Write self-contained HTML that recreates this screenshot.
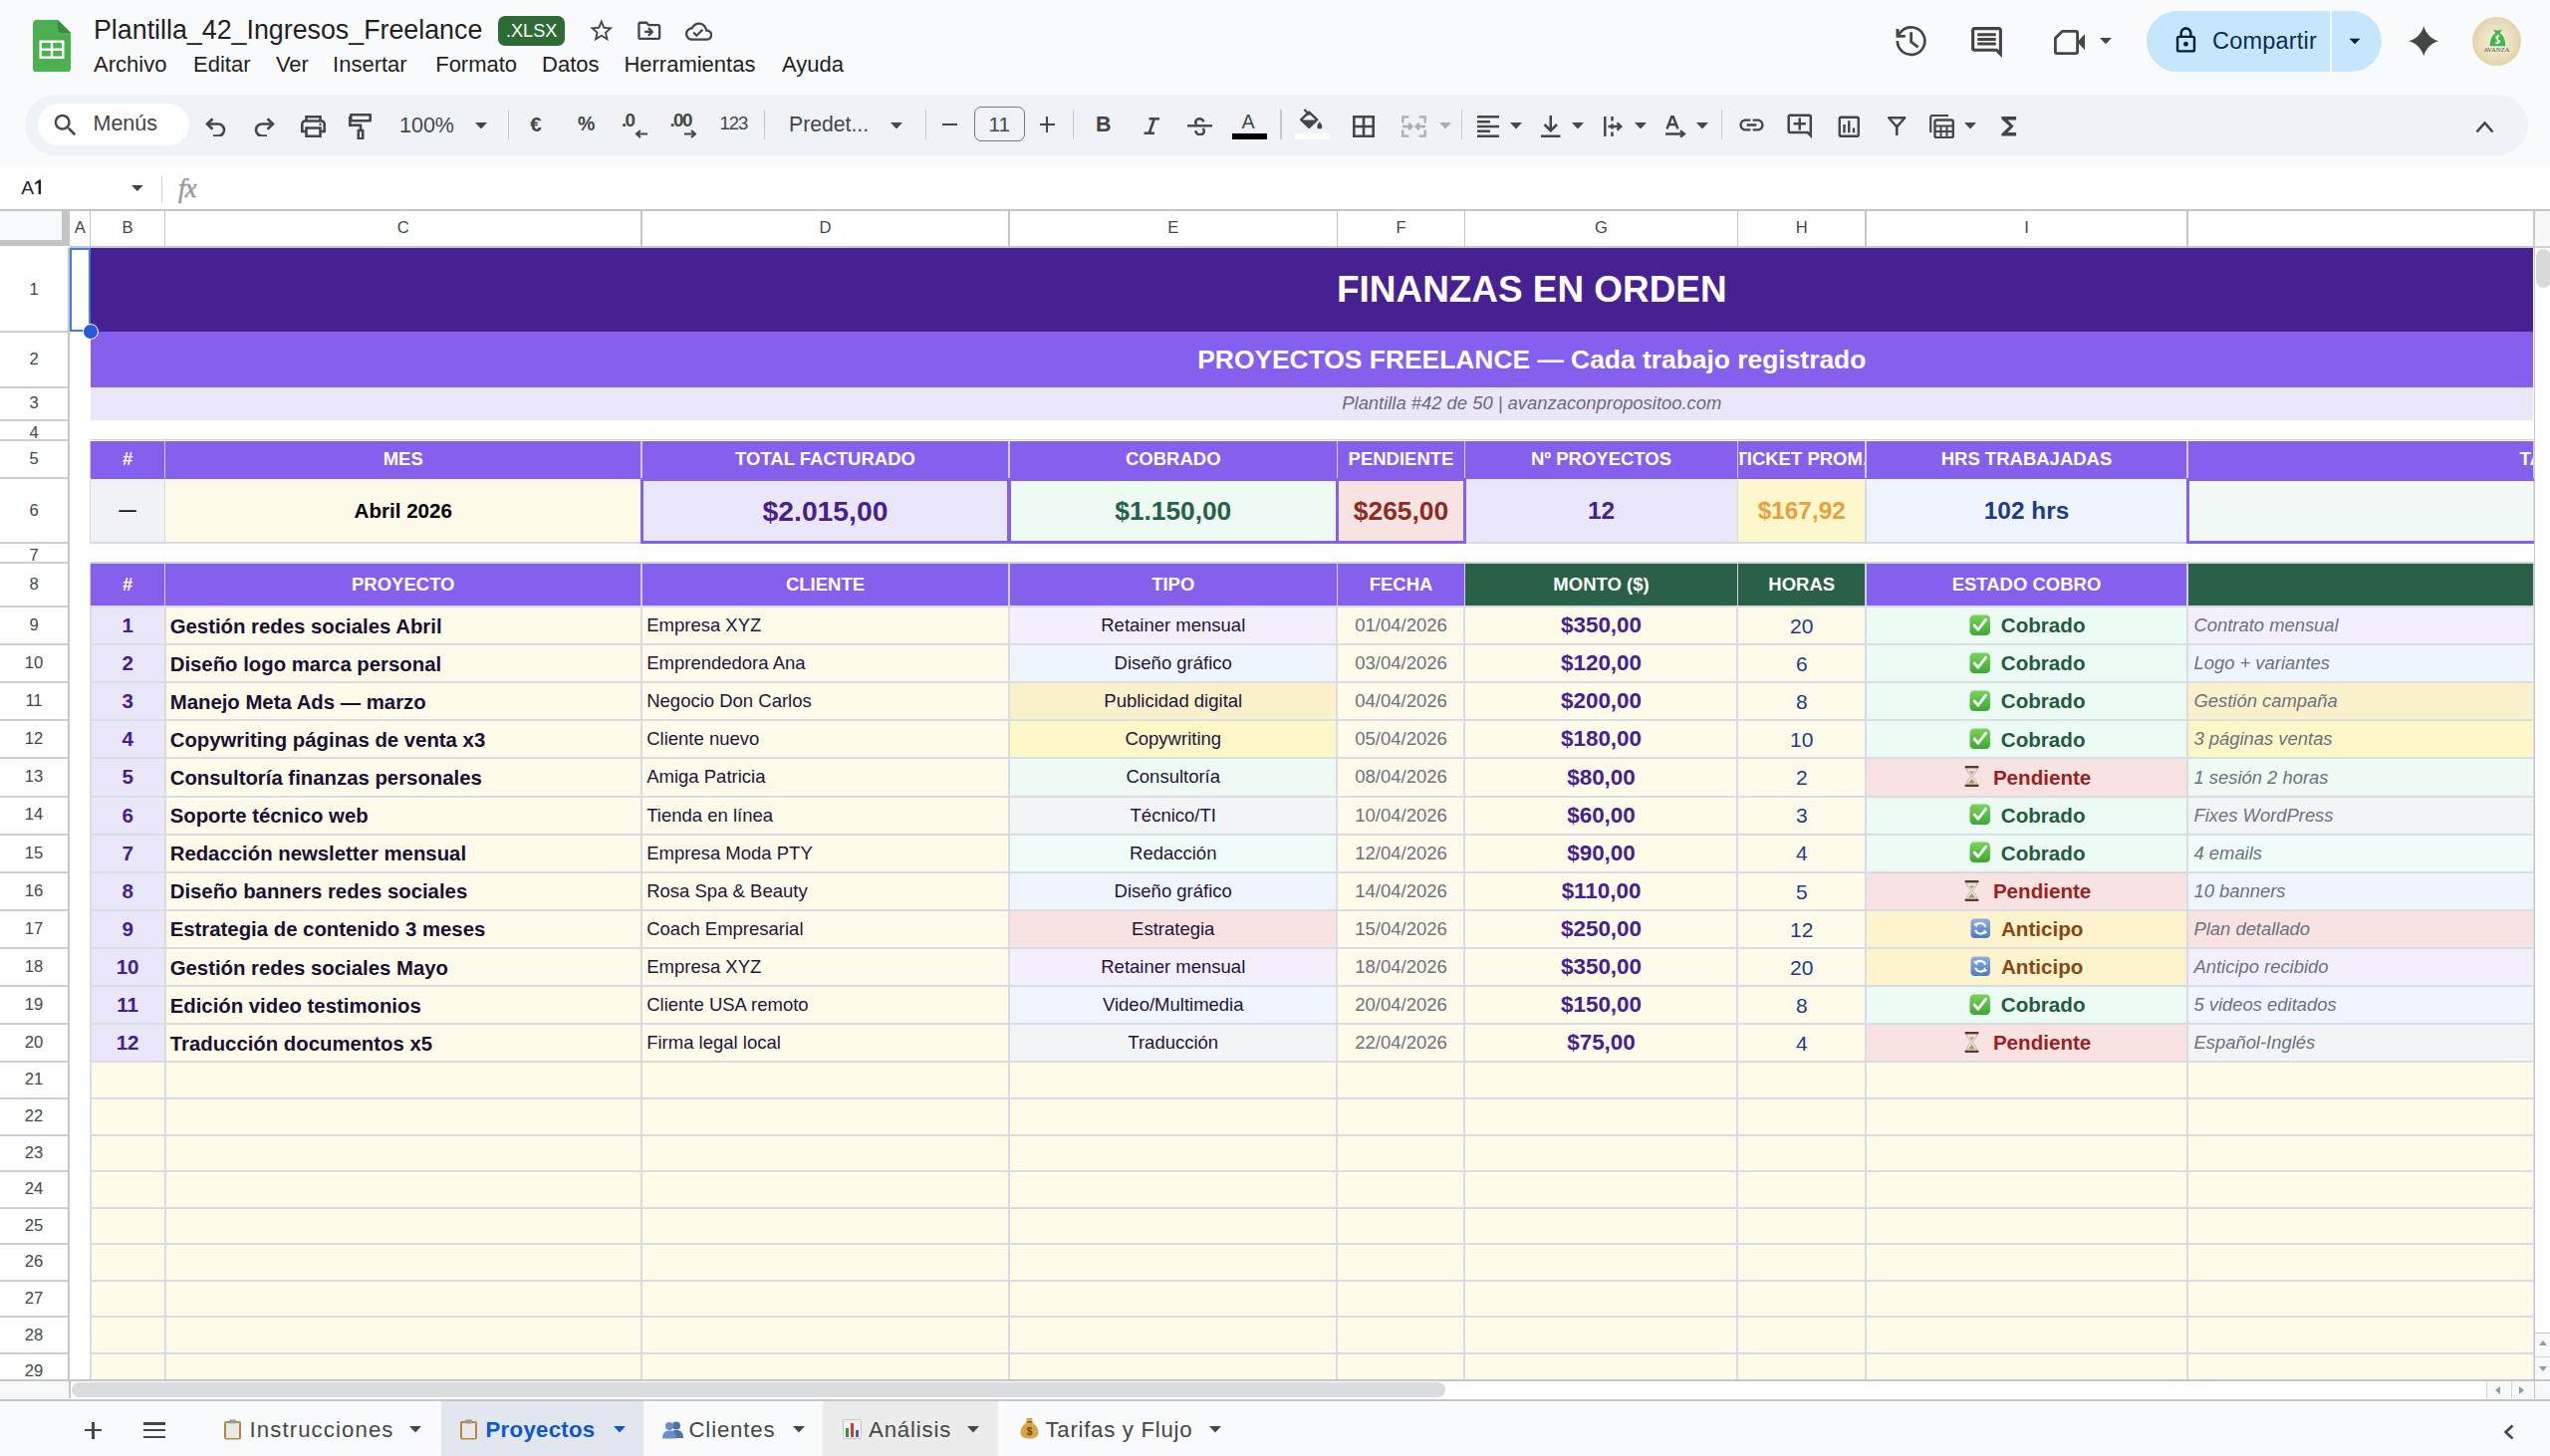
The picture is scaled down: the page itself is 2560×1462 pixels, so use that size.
<!DOCTYPE html><html><head><meta charset="utf-8"><style>html,body{margin:0;padding:0;width:2560px;height:1462px;overflow:hidden;background:#fff;}body{font-family:"Liberation Sans", sans-serif;position:relative;}svg{display:block}</style></head><body><div style="position:absolute;left:0.00px;top:0.00px;width:2560.00px;height:167.50px;background:#f9fbfd;"></div><svg style="position:absolute;left:33px;top:19.5px;" width="38" height="52.5" viewBox="0 0 38 52.5" fill="#4caf50"><path d="M4 0H25L38 13V48.5A4 4 0 0 1 34 52.5H4A4 4 0 0 1 0 48.5V4A4 4 0 0 1 4 0Z" fill="#4caf50"/><path d="M25 0L38 13H29A4 4 0 0 1 25 9Z" fill="#388e3c"/><path d="M6.5 20.5H31.5V39H6.5Z" fill="#fff"/><path d="M9 23H17.8V28.6H9ZM20.2 23H29V28.6H20.2ZM9 31H17.8V36.5H9ZM20.2 31H29V36.5H20.2Z" fill="#4caf50"/></svg><div style="position:absolute;left:94.00px;top:17.01px;font-size:26.8px;line-height:1;color:#1f1f1f;font-weight:normal;font-style:normal;white-space:nowrap;">Plantilla_42_Ingresos_Freelance</div><div style="position:absolute;left:500.2px;top:16.1px;width:67px;height:30.1px;background:#2d6a34;border-radius:7px;"></div><div style="position:absolute;left:-166.30px;width:1400px;text-align:center;top:22.49px;font-size:18.2px;line-height:1;color:#fff;font-weight:normal;font-style:normal;white-space:nowrap;">.XLSX</div><svg style="position:absolute;left:589.7px;top:17px;" width="27.6" height="27.6" viewBox="0 0 24 24" fill="#444"><path d="M22 9.24l-7.19-.62L12 2 9.19 8.63 2 9.24l5.46 4.73L5.82 21 12 17.27 18.18 21l-1.63-7.03L22 9.24zM12 15.4l-3.76 2.27 1-4.28-3.32-2.88 4.38-.38L12 6.1l1.71 4.04 4.38.38-3.32 2.88 1 4.28L12 15.4z"/></svg><svg style="position:absolute;left:638.1px;top:17.3px;" width="27.6" height="27.6" viewBox="0 0 24 24" fill="#444"><path d="M20 6h-8l-2-2H4c-1.1 0-1.99.9-1.99 2L2 18c0 1.1.9 2 2 2h16c1.1 0 2-.9 2-2V8c0-1.1-.9-2-2-2zm0 12H4V6h5.17l2 2H20v10zm-7.84-6H8v2h4.16l-1.59 1.59L11.99 17 16 13.01 11.99 9l-1.41 1.41L12.16 12z"/></svg><svg style="position:absolute;left:687.6px;top:17.8px;" width="27.3" height="27.3" viewBox="0 0 24 24" fill="#444"><path d="M19.35 10.04C18.67 6.59 15.64 4 12 4 9.11 4 6.6 5.64 5.35 8.04 2.34 8.36 0 10.91 0 14c0 3.31 2.69 6 6 6h13c2.76 0 5-2.24 5-5 0-2.64-2.05-4.78-4.65-4.96zM19 18H6c-2.21 0-4-1.79-4-4 0-2.05 1.53-3.76 3.56-3.97l1.07-.11.5-.95C8.08 7.14 9.94 6 12 6c2.62 0 4.88 1.86 5.39 4.43l.3 1.5 1.53.11c1.56.1 2.78 1.41 2.78 2.96 0 1.65-1.35 3-3 3zm-9-3.82l-2.09-2.09L6.5 13.5 10 17l6.01-6.01-1.41-1.41z"/></svg><div style="position:absolute;left:94.10px;top:53.68px;font-size:22px;line-height:1;color:#1f1f1f;font-weight:normal;font-style:normal;white-space:nowrap;">Archivo</div><div style="position:absolute;left:194.00px;top:53.68px;font-size:22px;line-height:1;color:#1f1f1f;font-weight:normal;font-style:normal;white-space:nowrap;">Editar</div><div style="position:absolute;left:276.90px;top:53.68px;font-size:22px;line-height:1;color:#1f1f1f;font-weight:normal;font-style:normal;white-space:nowrap;">Ver</div><div style="position:absolute;left:334.10px;top:53.68px;font-size:22px;line-height:1;color:#1f1f1f;font-weight:normal;font-style:normal;white-space:nowrap;">Insertar</div><div style="position:absolute;left:437.20px;top:53.68px;font-size:22px;line-height:1;color:#1f1f1f;font-weight:normal;font-style:normal;white-space:nowrap;">Formato</div><div style="position:absolute;left:544.10px;top:53.68px;font-size:22px;line-height:1;color:#1f1f1f;font-weight:normal;font-style:normal;white-space:nowrap;">Datos</div><div style="position:absolute;left:626.40px;top:53.68px;font-size:22px;line-height:1;color:#1f1f1f;font-weight:normal;font-style:normal;white-space:nowrap;">Herramientas</div><div style="position:absolute;left:784.90px;top:53.68px;font-size:22px;line-height:1;color:#1f1f1f;font-weight:normal;font-style:normal;white-space:nowrap;">Ayuda</div><svg style="position:absolute;left:1900px;top:22px;" width="38" height="38" viewBox="0 0 38 38" fill="none"><path d="M4.85 19.1A13.75 13.75 0 1 0 8.9 9.4L5.2 13.6" fill="none" stroke="#444746" stroke-width="2.7"/><path d="M3.5 7H6.5V13H12.8V15.8H3.5Z" fill="#444746"/><path d="M18.65 10.3V20L25.6 25.3" fill="none" stroke="#444746" stroke-width="2.8" stroke-linejoin="miter"/></svg><svg style="position:absolute;left:1975.5px;top:23.5px;" width="37" height="37" viewBox="0 0 24 24" fill="#444"><path d="M21.99 4c0-1.1-.89-2-1.99-2H4c-1.1 0-2 .9-2 2v12c0 1.1.9 2 2 2h14l4 4-.01-18zM20 4v13.17L18.83 16H4V4h16zM6 12h12v2H6zm0-3h12v2H6zm0-3h12v2H6z"/></svg><svg style="position:absolute;left:2062px;top:29.5px;" width="32" height="25" viewBox="0 0 32 25" fill="none"><path d="M1.4 8.3L8.3 1.4H21.8A1.8 1.8 0 0 1 23.6 3.2V21.8A1.8 1.8 0 0 1 21.8 23.6H3.2A1.8 1.8 0 0 1 1.4 21.8Z" fill="none" stroke="#444746" stroke-width="2.8" stroke-linejoin="round"/><path d="M23.5 12.2L31 4V20.3Z" fill="#444746"/></svg><svg style="position:absolute;left:2108.0px;top:37.85px;" width="12" height="6.3" viewBox="0 0 12 6.3" fill="none"><path d="M0 0H12L6.0 6.3Z" fill="#444746"/></svg><div style="position:absolute;left:2154.7px;top:11px;width:236px;height:60.5px;background:#c6e6fd;border-radius:31px;"></div><div style="position:absolute;left:2339.00px;top:11.00px;width:1.80px;height:60.50px;background:#f9fbfd;"></div><svg style="position:absolute;left:2180px;top:26px;" width="29" height="29" viewBox="0 0 24 24" fill="#001d35"><path d="M18 8h-1V6c0-2.76-2.24-5-5-5S7 3.24 7 6v2H6c-1.1 0-2 .9-2 2v10c0 1.1.9 2 2 2h12c1.1 0 2-.9 2-2V10c0-1.1-.9-2-2-2zM9 6c0-1.66 1.34-3 3-3s3 1.34 3 3v2H9V6zm9 14H6V10h12v10zm-6-3c1.1 0 2-.9 2-2s-.9-2-2-2-2 .9-2 2 .9 2 2 2z"/></svg><div style="position:absolute;left:2221.00px;top:29.61px;font-size:23.5px;line-height:1;color:#0b2e4f;font-weight:normal;font-style:normal;white-space:nowrap;letter-spacing:0.2px;">Compartir</div><svg style="position:absolute;left:2351px;top:28px;" width="26" height="26" viewBox="0 0 24 24" fill="#001d35"><path d="M7 10l5 5 5-5z"/></svg><svg style="position:absolute;left:2418px;top:26px;" width="30.5" height="30.5" viewBox="0 0 30 30" fill="none"><path d="M15 0C16.6 7.2 22.8 13.4 30 15C22.8 16.6 16.6 22.8 15 30C13.4 22.8 7.2 16.6 0 15C7.2 13.4 13.4 7.2 15 0Z" fill="#444746"/></svg><div style="position:absolute;left:2482px;top:16.6px;width:49px;height:49px;border-radius:50%;background:radial-gradient(circle at 50% 50%,#f5efdf 0%,#e8dcb8 55%,#d5c693 100%);"></div><svg style="position:absolute;left:2498.5px;top:28.5px;" width="17" height="18" viewBox="0 0 17 18" fill="none"><path d="M4 0.5C6 1.8 11 1.8 13 0.5L10.6 4.2C14.5 6.5 16.5 12 16.2 17.2H0.8C0.5 12 2.5 6.5 6.4 4.2Z" fill="#3fb54a"/><path d="M10.5 7.5C9.8 6.8 7 6.6 6.8 8.6C6.6 10.6 10.6 10.2 10.5 12.5C10.4 14.6 7.5 14.6 6.3 13.6M8.5 5.8V15.2" fill="none" stroke="#e9f5e0" stroke-width="1.4"/></svg><div style="position:absolute;left:1806.50px;width:1400px;text-align:center;top:46.67px;font-size:6.3px;line-height:1;color:#55503a;font-weight:normal;font-style:normal;white-space:nowrap;font-family:'Liberation Serif', serif;letter-spacing:0.2px;">AVANZA</div><div style="position:absolute;left:25px;top:94.5px;width:2512.5px;height:61px;background:#eff3f8;border-radius:31px;"></div><div style="position:absolute;left:38.1px;top:103.6px;width:152.4px;height:42.3px;background:#fff;border-radius:22px;"></div><svg style="position:absolute;left:50.9px;top:110.5px;" width="29.5" height="29.5" viewBox="0 0 24 24" fill="#444746"><path d="M15.5 14h-.79l-.28-.27C15.41 12.59 16 11.11 16 9.5 16 5.91 13.09 3 9.5 3S3 5.91 3 9.5 5.91 16 9.5 16c1.61 0 3.09-.59 4.23-1.57l.27.28v.79l5 4.99L20.49 19l-4.99-5zm-6 0C7.01 14 5 11.99 5 9.5S7.01 5 9.5 5 14 7.01 14 9.5 11.99 14 9.5 14z"/></svg><div style="position:absolute;left:93.50px;top:113.70px;font-size:21.5px;line-height:1;color:#444;font-weight:normal;font-style:normal;white-space:nowrap;">Menús</div><svg style="position:absolute;left:206px;top:118px;" width="21" height="19" viewBox="0 0 21 19" fill="none"><path d="M2 6.5H13A6 6 0 0 1 13 18.5H8" fill="none" stroke="#444746" stroke-width="2.6"/><path d="M7.5 1.2L2 6.5L7.5 11.8" fill="none" stroke="#444746" stroke-width="2.6"/></svg><svg style="position:absolute;left:254.5px;top:118px;" width="21" height="19" viewBox="0 0 21 19" fill="none"><path d="M19 6.5H8A6 6 0 0 0 8 18.5H13" fill="none" stroke="#444746" stroke-width="2.6"/><path d="M13.5 1.2L19 6.5L13.5 11.8" fill="none" stroke="#444746" stroke-width="2.6"/></svg><svg style="position:absolute;left:301.5px;top:115.5px;" width="25" height="22" viewBox="0 0 25 22" fill="none"><path d="M5.5 5V1.3H19.5V5" fill="none" stroke="#444746" stroke-width="2.6"/><path d="M5.5 16H1.3V8.5A3 3 0 0 1 4.3 5.5H20.7A3 3 0 0 1 23.7 8.5V16H19.5" fill="none" stroke="#444746" stroke-width="2.6"/><path d="M5.5 12.5H19.5V20.7H5.5Z" fill="none" stroke="#444746" stroke-width="2.6"/><circle cx="19.5" cy="9" r="1.2" fill="#444746"/></svg><svg style="position:absolute;left:350px;top:113.5px;" width="23" height="26.5" viewBox="0 0 23 26.5" fill="none"><path d="M2.3 1.3H21.7V7.2H2.3Z" fill="none" stroke="#444746" stroke-width="2.6" stroke-linejoin="round"/><path d="M2.3 4H1.3V11.8H12V17" fill="none" stroke="#444746" stroke-width="2.6"/><path d="M9.8 17H14.2V25.2H9.8Z" fill="none" stroke="#444746" stroke-width="2.6" stroke-linejoin="round"/></svg><div style="position:absolute;left:401.00px;top:116.20px;font-size:21.5px;line-height:1;color:#444746;font-weight:normal;font-style:normal;white-space:nowrap;">100%</div><svg style="position:absolute;left:477.3px;top:122.75px;" width="12" height="6.5" viewBox="0 0 12 6.5" fill="none"><path d="M0 0H12L6.0 6.5Z" fill="#444746"/></svg><div style="position:absolute;left:509.50px;top:110.00px;width:1.40px;height:30.00px;background:#c7c7c7;"></div><div style="position:absolute;left:532.30px;top:114.55px;font-size:20.5px;line-height:1;color:#444746;font-weight:bold;font-style:normal;white-space:nowrap;">€</div><div style="position:absolute;left:580.00px;top:115.39px;font-size:19.5px;line-height:1;color:#444746;font-weight:bold;font-style:normal;white-space:nowrap;">%</div><div style="position:absolute;left:624.00px;top:112.09px;font-size:18.8px;line-height:1;color:#444746;font-weight:bold;font-style:normal;white-space:nowrap;letter-spacing:-1.6px;">.0</div><svg style="position:absolute;left:637px;top:130px;" width="14" height="9" viewBox="0 0 14 9" fill="none"><path d="M13 4.5H2.5M6 1L2 4.5L6 8" fill="none" stroke="#444746" stroke-width="2"/></svg><div style="position:absolute;left:672.50px;top:112.09px;font-size:18.8px;line-height:1;color:#444746;font-weight:bold;font-style:normal;white-space:nowrap;letter-spacing:-1.6px;">.00</div><svg style="position:absolute;left:685.5px;top:130px;" width="14" height="9" viewBox="0 0 14 9" fill="none"><path d="M1 4.5H11.5M8 1L12 4.5L8 8" fill="none" stroke="#444746" stroke-width="2"/></svg><div style="position:absolute;left:722.50px;top:115.26px;font-size:18.6px;line-height:1;color:#444746;font-weight:normal;font-style:normal;white-space:nowrap;letter-spacing:-1.1px;">123</div><div style="position:absolute;left:767.00px;top:110.00px;width:1.40px;height:30.00px;background:#c7c7c7;"></div><div style="position:absolute;left:792.00px;top:113.95px;font-size:21.2px;line-height:1;color:#444746;font-weight:normal;font-style:normal;white-space:nowrap;">Predet...</div><svg style="position:absolute;left:893.5px;top:122.75px;" width="12" height="6.5" viewBox="0 0 12 6.5" fill="none"><path d="M0 0H12L6.0 6.5Z" fill="#444746"/></svg><div style="position:absolute;left:928.60px;top:110.00px;width:1.40px;height:30.00px;background:#c7c7c7;"></div><div style="position:absolute;left:945.80px;top:123.80px;width:15.40px;height:2.20px;background:#444746;"></div><div style="position:absolute;left:977.6px;top:107.2px;width:51.4px;height:35.3px;border:1.6px solid #747775;border-radius:7px;box-sizing:border-box;"></div><div style="position:absolute;left:303.30px;width:1400px;text-align:center;top:114.99px;font-size:20.8px;line-height:1;color:#444746;font-weight:normal;font-style:normal;white-space:nowrap;">11</div><div style="position:absolute;left:1043.50px;top:123.80px;width:15.70px;height:2.20px;background:#444746;"></div><div style="position:absolute;left:1050.30px;top:117.40px;width:2.20px;height:15.20px;background:#444746;"></div><div style="position:absolute;left:1076.60px;top:110.00px;width:1.40px;height:30.00px;background:#c7c7c7;"></div><div style="position:absolute;left:1100.00px;top:115.20px;font-size:21.5px;line-height:1;color:#444746;font-weight:bold;font-style:normal;white-space:nowrap;">B</div><svg style="position:absolute;left:1147.5px;top:118px;" width="16.5" height="17" viewBox="0 0 16.5 17" fill="none"><path d="M5.5 1.3H16M0.5 15.7H11M10.8 1.3L5.7 15.7" fill="none" stroke="#444746" stroke-width="2.6"/></svg><svg style="position:absolute;left:1192px;top:117.5px;" width="25" height="18.5" viewBox="0 0 25 18.5" fill="none"><path d="M16.5 4.2C15.5 2.3 14 1.3 12.5 1.3C10 1.3 8.3 2.6 8.3 4.6C8.3 5.5 8.6 6.2 9.2 6.8" fill="none" stroke="#444746" stroke-width="2.6"/><path d="M0 8.3H25" stroke="#444746" stroke-width="2.4"/><path d="M8.2 13.2C8.8 15.6 10.5 17.2 12.5 17.2C15 17.2 16.8 15.9 16.8 13.7C16.8 12.5 16.4 11.6 15.6 10.8" fill="none" stroke="#444746" stroke-width="2.6"/></svg><div style="position:absolute;left:1246.50px;top:113.04px;font-size:19.8px;line-height:1;color:#444746;font-weight:normal;font-style:normal;white-space:nowrap;">A</div><div style="position:absolute;left:1237.00px;top:133.90px;width:35.00px;height:6.10px;background:#000;"></div><div style="position:absolute;left:1285.20px;top:110.00px;width:1.40px;height:30.00px;background:#c7c7c7;"></div><svg style="position:absolute;left:1305px;top:108.5px;" width="23.5" height="21.5" viewBox="0 0 23.5 21.5" fill="none"><path d="M4.5 1L9.5 6.5" stroke="#444746" stroke-width="2.4"/><path d="M1.2 11.2L9.2 3.6L17.2 11.2L9.2 18.8Z" fill="none" stroke="#444746" stroke-width="2.4" stroke-linejoin="round"/><path d="M2.5 11.5H16L9.2 18Z" fill="#444746"/><path d="M19.8 13.2C21 14.8 22.3 16.2 22.3 17.9A2.5 2.5 0 0 1 17.3 17.9C17.3 16.2 18.6 14.8 19.8 13.2Z" fill="#444746"/></svg><div style="position:absolute;left:1300.00px;top:134.20px;width:35.00px;height:5.80px;background:#ffffff;"></div><svg style="position:absolute;left:1357.5px;top:115.5px;" width="22" height="22" viewBox="0 0 22 22" fill="none"><path d="M1.3 1.3H20.7V20.7H1.3ZM11 1.3V20.7M1.3 11H20.7" fill="none" stroke="#444746" stroke-width="2.6"/></svg><svg style="position:absolute;left:1407px;top:115.5px;" width="25" height="22" viewBox="0 0 25 22" fill="none"><path d="M7.5 1.3H1.3V7.5M1.3 14.5V20.7H7.5M17.5 1.3H23.7V7.5M23.7 14.5V20.7H17.5M1 11H10.2M7.2 7.8L10.5 11L7.2 14.2M24 11H14.8M17.8 7.8L14.5 11L17.8 14.2" fill="none" stroke="#adadad" stroke-width="2.3"/></svg><svg style="position:absolute;left:1445.3px;top:123.05px;" width="12" height="6.5" viewBox="0 0 12 6.5" fill="none"><path d="M0 0H12L6.0 6.5Z" fill="#adadad"/></svg><div style="position:absolute;left:1466.60px;top:110.00px;width:1.40px;height:30.00px;background:#c7c7c7;"></div><svg style="position:absolute;left:1483px;top:115.5px;" width="22" height="22" viewBox="0 0 22 22" fill="none"><path d="M0 1.3H22M0 6.3H13M0 11H22M0 15.7H13M0 20.7H22" stroke="#444746" stroke-width="2.4"/></svg><svg style="position:absolute;left:1515.6px;top:123.05px;" width="12" height="6.5" viewBox="0 0 12 6.5" fill="none"><path d="M0 0H12L6.0 6.5Z" fill="#444746"/></svg><svg style="position:absolute;left:1547px;top:115.5px;" width="19.5" height="22" viewBox="0 0 19.5 22" fill="none"><path d="M9.75 0V15M3.5 9L9.75 15.2L16 9M0 20.7H19.5" fill="none" stroke="#444746" stroke-width="2.5"/></svg><svg style="position:absolute;left:1578.3px;top:123.05px;" width="12" height="6.5" viewBox="0 0 12 6.5" fill="none"><path d="M0 0H12L6.0 6.5Z" fill="#444746"/></svg><svg style="position:absolute;left:1609.5px;top:116.5px;" width="19" height="20" viewBox="0 0 19 20" fill="none"><path d="M1.3 0V20M8.5 0V4.5M8.5 7.5V12.5M8.5 15.5V20M4.5 10H17M13.5 6.3L17.3 10L13.5 13.7" fill="none" stroke="#444746" stroke-width="2.5"/></svg><svg style="position:absolute;left:1640.7px;top:123.05px;" width="12" height="6.5" viewBox="0 0 12 6.5" fill="none"><path d="M0 0H12L6.0 6.5Z" fill="#444746"/></svg><svg style="position:absolute;left:1671.5px;top:115.5px;" width="21.5" height="22" viewBox="0 0 21.5 22" fill="none"><path d="M1.5 13.5L6.2 1.2H7.8L12.5 13.5M3.2 9H10.8" fill="none" stroke="#444746" stroke-width="2.4"/><path d="M0 18.5H18M15 15.2L18.8 18.5L15 21.8" fill="none" stroke="#444746" stroke-width="2.4"/></svg><svg style="position:absolute;left:1703.0px;top:123.05px;" width="12" height="6.5" viewBox="0 0 12 6.5" fill="none"><path d="M0 0H12L6.0 6.5Z" fill="#444746"/></svg><div style="position:absolute;left:1727.50px;top:110.00px;width:1.40px;height:30.00px;background:#c7c7c7;"></div><svg style="position:absolute;left:1743.5px;top:110.5px;" width="29" height="29" viewBox="0 0 24 24" fill="#444"><path d="M3.9 12c0-1.71 1.39-3.1 3.1-3.1h4V7H7c-2.76 0-5 2.24-5 5s2.24 5 5 5h4v-1.9H7c-1.71 0-3.1-1.39-3.1-3.1zM8 13h8v-2H8v2zm9-6h-4v1.9h4c1.71 0 3.1 1.39 3.1 3.1s-1.39 3.1-3.1 3.1h-4V17h4c2.76 0 5-2.24 5-5s-2.24-5-5-5z"/></svg><svg style="position:absolute;left:1792px;top:111.5px;" width="29.5" height="29.5" viewBox="0 0 24 24" fill="#444"><path d="M22 4c0-1.1-.9-2-2-2H4c-1.1 0-1.99.9-1.99 2L2 16c0 1.1.9 2 2 2h14l4 4V4zm-2 13.17L18.83 16H4V4h16v13.17zM13 5h-2v4H7v2h4v4h2v-4h4V9h-4z"/></svg><svg style="position:absolute;left:1841.5px;top:112.5px;" width="28.5" height="28.5" viewBox="0 0 24 24" fill="#444"><path d="M19 3H5c-1.1 0-2 .9-2 2v14c0 1.1.9 2 2 2h14c1.1 0 2-.9 2-2V5c0-1.1-.9-2-2-2zm0 16H5V5h14v14zM7 10h2v7H7zm4-3h2v10h-2zm4 6h2v4h-2z"/></svg><svg style="position:absolute;left:1895px;top:117px;" width="18.5" height="19" viewBox="0 0 18.5 19" fill="none"><path d="M1.2 1.2H17.3L9.25 10.5Z" fill="none" stroke="#444746" stroke-width="2.4" stroke-linejoin="round"/><path d="M9.25 9V18.5" stroke="#444746" stroke-width="2.6" stroke-linecap="round"/></svg><svg style="position:absolute;left:1937px;top:114.5px;" width="25" height="24.5" viewBox="0 0 25 24.5" fill="none"><path d="M1.2 18V3A2 2 0 0 1 3.2 1H19" fill="none" stroke="#444746" stroke-width="2.2"/><rect x="5.5" y="5.5" width="18.3" height="17.8" rx="2" fill="none" stroke="#444746" stroke-width="2.4"/><path d="M5.5 11.5H23.8M5.5 17H23.8M11.5 11.5V23M17.5 11.5V23" stroke="#444746" stroke-width="2"/></svg><svg style="position:absolute;left:1971.7px;top:123.05px;" width="12" height="6.5" viewBox="0 0 12 6.5" fill="none"><path d="M0 0H12L6.0 6.5Z" fill="#444746"/></svg><svg style="position:absolute;left:2001.5px;top:111.5px;" width="29.5" height="29.5" viewBox="0 0 24 24" fill="#444"><path d="M18 4H6v2l6.5 6L6 18v2h12v-3h-7l5-5-5-5h7z"/></svg><svg style="position:absolute;left:2485px;top:119.5px;" width="19" height="15" viewBox="0 0 19 15" fill="none"><path d="M1.5 12.5L9.5 3.5L17.5 12.5" fill="none" stroke="#444746" stroke-width="2.6"/></svg><div style="position:absolute;left:21.30px;top:178.65px;font-size:19.2px;line-height:1;color:#1f1f1f;font-weight:normal;font-style:normal;white-space:nowrap;">A</div><svg style="position:absolute;left:34px;top:180px;" width="8" height="15" viewBox="0 0 8 15" fill="none"><path d="M1.2 3.6L5.2 0.6H7V14.9H4.6V3.5L1.2 5.6Z" fill="#1f1f1f"/></svg><svg style="position:absolute;left:131.5px;top:185.9px;" width="11.7" height="5.9" viewBox="0 0 11.7 5.9" fill="none"><path d="M0 0H11.7L5.85 5.9Z" fill="#444"/></svg><div style="position:absolute;left:161.80px;top:177.00px;width:1.20px;height:25.50px;background:#c7d0e0;"></div><div style="position:absolute;left:179.00px;top:176.07px;font-size:26.5px;line-height:1;color:#9b9b9b;font-weight:normal;font-style:italic;white-space:nowrap;font-family:'Liberation Serif', serif;letter-spacing:-0.5px;-webkit-text-stroke:0.5px #9b9b9b;">fx</div><div style="position:absolute;left:0.00px;top:210.40px;width:2560.00px;height:1.40px;background:#c4c7c5;"></div><div style="position:absolute;left:0.00px;top:211.80px;width:62.40px;height:28.90px;background:#f8f9fa;"></div><div style="position:absolute;left:62.40px;top:211.80px;width:7.20px;height:35.70px;background:#c4c4c4;"></div><div style="position:absolute;left:0.00px;top:240.70px;width:69.60px;height:6.80px;background:#c4c4c4;"></div><div style="position:absolute;left:69.60px;top:247.30px;width:2490.40px;height:1.40px;background:#c4c7c5;"></div><div style="position:absolute;left:90.00px;top:211.80px;width:1.40px;height:35.50px;background:#c4c7c5;"></div><div style="position:absolute;left:164.80px;top:211.80px;width:1.40px;height:35.50px;background:#c4c7c5;"></div><div style="position:absolute;left:643.30px;top:211.80px;width:1.40px;height:35.50px;background:#c4c7c5;"></div><div style="position:absolute;left:1012.30px;top:211.80px;width:1.40px;height:35.50px;background:#c4c7c5;"></div><div style="position:absolute;left:1341.80px;top:211.80px;width:1.40px;height:35.50px;background:#c4c7c5;"></div><div style="position:absolute;left:1469.80px;top:211.80px;width:1.40px;height:35.50px;background:#c4c7c5;"></div><div style="position:absolute;left:1743.80px;top:211.80px;width:1.40px;height:35.50px;background:#c4c7c5;"></div><div style="position:absolute;left:1872.30px;top:211.80px;width:1.40px;height:35.50px;background:#c4c7c5;"></div><div style="position:absolute;left:2195.30px;top:211.80px;width:1.40px;height:35.50px;background:#c4c7c5;"></div><div style="position:absolute;left:2542.80px;top:211.80px;width:1.40px;height:35.50px;background:#c4c7c5;"></div><div style="position:absolute;left:-619.65px;width:1400px;text-align:center;top:220.55px;font-size:16.6px;line-height:1;color:#444746;font-weight:normal;font-style:normal;white-space:nowrap;">A</div><div style="position:absolute;left:-571.90px;width:1400px;text-align:center;top:220.55px;font-size:16.6px;line-height:1;color:#444746;font-weight:normal;font-style:normal;white-space:nowrap;">B</div><div style="position:absolute;left:-295.25px;width:1400px;text-align:center;top:220.55px;font-size:16.6px;line-height:1;color:#444746;font-weight:normal;font-style:normal;white-space:nowrap;">C</div><div style="position:absolute;left:128.50px;width:1400px;text-align:center;top:220.55px;font-size:16.6px;line-height:1;color:#444746;font-weight:normal;font-style:normal;white-space:nowrap;">D</div><div style="position:absolute;left:477.75px;width:1400px;text-align:center;top:220.55px;font-size:16.6px;line-height:1;color:#444746;font-weight:normal;font-style:normal;white-space:nowrap;">E</div><div style="position:absolute;left:706.50px;width:1400px;text-align:center;top:220.55px;font-size:16.6px;line-height:1;color:#444746;font-weight:normal;font-style:normal;white-space:nowrap;">F</div><div style="position:absolute;left:907.50px;width:1400px;text-align:center;top:220.55px;font-size:16.6px;line-height:1;color:#444746;font-weight:normal;font-style:normal;white-space:nowrap;">G</div><div style="position:absolute;left:1108.75px;width:1400px;text-align:center;top:220.55px;font-size:16.6px;line-height:1;color:#444746;font-weight:normal;font-style:normal;white-space:nowrap;">H</div><div style="position:absolute;left:1334.50px;width:1400px;text-align:center;top:220.55px;font-size:16.6px;line-height:1;color:#444746;font-weight:normal;font-style:normal;white-space:nowrap;">I</div><div style="position:absolute;left:68.40px;top:248.50px;width:1.60px;height:1137.50px;background:#c4c7c5;"></div><div style="position:absolute;left:0.00px;top:332.00px;width:69.00px;height:1.50px;background:#cdcfcf;"></div><div style="position:absolute;left:0;top:248.50px;width:68px;height:84.50px;overflow:hidden;"><div style="position:absolute;left:-666.00px;width:1400px;text-align:center;top:34.10px;font-size:16.6px;line-height:1;color:#444746;font-weight:normal;font-style:normal;white-space:nowrap;">1</div></div><div style="position:absolute;left:0.00px;top:388.00px;width:69.00px;height:1.50px;background:#cdcfcf;"></div><div style="position:absolute;left:0;top:333.00px;width:68px;height:56.00px;overflow:hidden;"><div style="position:absolute;left:-666.00px;width:1400px;text-align:center;top:19.85px;font-size:16.6px;line-height:1;color:#444746;font-weight:normal;font-style:normal;white-space:nowrap;">2</div></div><div style="position:absolute;left:0.00px;top:421.00px;width:69.00px;height:1.50px;background:#cdcfcf;"></div><div style="position:absolute;left:0;top:389.00px;width:68px;height:33.00px;overflow:hidden;"><div style="position:absolute;left:-666.00px;width:1400px;text-align:center;top:8.35px;font-size:16.6px;line-height:1;color:#444746;font-weight:normal;font-style:normal;white-space:nowrap;">3</div></div><div style="position:absolute;left:0.00px;top:441.00px;width:69.00px;height:1.50px;background:#cdcfcf;"></div><div style="position:absolute;left:0;top:422.00px;width:68px;height:19.50px;overflow:hidden;"><div style="position:absolute;left:-666.00px;width:1400px;text-align:center;top:5.25px;font-size:16.6px;line-height:1;color:#444746;font-weight:normal;font-style:normal;white-space:nowrap;">4</div></div><div style="position:absolute;left:0.00px;top:479.00px;width:69.00px;height:1.50px;background:#cdcfcf;"></div><div style="position:absolute;left:0;top:441.50px;width:68px;height:39.00px;overflow:hidden;"><div style="position:absolute;left:-666.00px;width:1400px;text-align:center;top:11.35px;font-size:16.6px;line-height:1;color:#444746;font-weight:normal;font-style:normal;white-space:nowrap;">5</div></div><div style="position:absolute;left:0.00px;top:544.00px;width:69.00px;height:1.50px;background:#cdcfcf;"></div><div style="position:absolute;left:0;top:480.50px;width:68px;height:64.50px;overflow:hidden;"><div style="position:absolute;left:-666.00px;width:1400px;text-align:center;top:24.10px;font-size:16.6px;line-height:1;color:#444746;font-weight:normal;font-style:normal;white-space:nowrap;">6</div></div><div style="position:absolute;left:0.00px;top:564.00px;width:69.00px;height:1.50px;background:#cdcfcf;"></div><div style="position:absolute;left:0;top:545.00px;width:68px;height:20.00px;overflow:hidden;"><div style="position:absolute;left:-666.00px;width:1400px;text-align:center;top:5.25px;font-size:16.6px;line-height:1;color:#444746;font-weight:normal;font-style:normal;white-space:nowrap;">7</div></div><div style="position:absolute;left:0.00px;top:608.00px;width:69.00px;height:1.50px;background:#cdcfcf;"></div><div style="position:absolute;left:0;top:565.00px;width:68px;height:44.00px;overflow:hidden;"><div style="position:absolute;left:-666.00px;width:1400px;text-align:center;top:13.85px;font-size:16.6px;line-height:1;color:#444746;font-weight:normal;font-style:normal;white-space:nowrap;">8</div></div><div style="position:absolute;left:0.00px;top:646.00px;width:69.00px;height:1.50px;background:#cdcfcf;"></div><div style="position:absolute;left:0;top:609.00px;width:68px;height:38.11px;overflow:hidden;"><div style="position:absolute;left:-666.00px;width:1400px;text-align:center;top:10.90px;font-size:16.6px;line-height:1;color:#444746;font-weight:normal;font-style:normal;white-space:nowrap;">9</div></div><div style="position:absolute;left:0.00px;top:684.00px;width:69.00px;height:1.50px;background:#cdcfcf;"></div><div style="position:absolute;left:0;top:647.11px;width:68px;height:38.11px;overflow:hidden;"><div style="position:absolute;left:-666.00px;width:1400px;text-align:center;top:10.90px;font-size:16.6px;line-height:1;color:#444746;font-weight:normal;font-style:normal;white-space:nowrap;">10</div></div><div style="position:absolute;left:0.00px;top:722.00px;width:69.00px;height:1.50px;background:#cdcfcf;"></div><div style="position:absolute;left:0;top:685.22px;width:68px;height:38.11px;overflow:hidden;"><div style="position:absolute;left:-666.00px;width:1400px;text-align:center;top:10.90px;font-size:16.6px;line-height:1;color:#444746;font-weight:normal;font-style:normal;white-space:nowrap;">11</div></div><div style="position:absolute;left:0.00px;top:760.00px;width:69.00px;height:1.50px;background:#cdcfcf;"></div><div style="position:absolute;left:0;top:723.33px;width:68px;height:38.11px;overflow:hidden;"><div style="position:absolute;left:-666.00px;width:1400px;text-align:center;top:10.90px;font-size:16.6px;line-height:1;color:#444746;font-weight:normal;font-style:normal;white-space:nowrap;">12</div></div><div style="position:absolute;left:0.00px;top:799.00px;width:69.00px;height:1.50px;background:#cdcfcf;"></div><div style="position:absolute;left:0;top:761.44px;width:68px;height:38.11px;overflow:hidden;"><div style="position:absolute;left:-666.00px;width:1400px;text-align:center;top:10.90px;font-size:16.6px;line-height:1;color:#444746;font-weight:normal;font-style:normal;white-space:nowrap;">13</div></div><div style="position:absolute;left:0.00px;top:837.00px;width:69.00px;height:1.50px;background:#cdcfcf;"></div><div style="position:absolute;left:0;top:799.55px;width:68px;height:38.11px;overflow:hidden;"><div style="position:absolute;left:-666.00px;width:1400px;text-align:center;top:10.90px;font-size:16.6px;line-height:1;color:#444746;font-weight:normal;font-style:normal;white-space:nowrap;">14</div></div><div style="position:absolute;left:0.00px;top:875.00px;width:69.00px;height:1.50px;background:#cdcfcf;"></div><div style="position:absolute;left:0;top:837.66px;width:68px;height:38.11px;overflow:hidden;"><div style="position:absolute;left:-666.00px;width:1400px;text-align:center;top:10.90px;font-size:16.6px;line-height:1;color:#444746;font-weight:normal;font-style:normal;white-space:nowrap;">15</div></div><div style="position:absolute;left:0.00px;top:913.00px;width:69.00px;height:1.50px;background:#cdcfcf;"></div><div style="position:absolute;left:0;top:875.77px;width:68px;height:38.11px;overflow:hidden;"><div style="position:absolute;left:-666.00px;width:1400px;text-align:center;top:10.90px;font-size:16.6px;line-height:1;color:#444746;font-weight:normal;font-style:normal;white-space:nowrap;">16</div></div><div style="position:absolute;left:0.00px;top:951.00px;width:69.00px;height:1.50px;background:#cdcfcf;"></div><div style="position:absolute;left:0;top:913.88px;width:68px;height:38.11px;overflow:hidden;"><div style="position:absolute;left:-666.00px;width:1400px;text-align:center;top:10.90px;font-size:16.6px;line-height:1;color:#444746;font-weight:normal;font-style:normal;white-space:nowrap;">17</div></div><div style="position:absolute;left:0.00px;top:989.00px;width:69.00px;height:1.50px;background:#cdcfcf;"></div><div style="position:absolute;left:0;top:951.99px;width:68px;height:38.11px;overflow:hidden;"><div style="position:absolute;left:-666.00px;width:1400px;text-align:center;top:10.90px;font-size:16.6px;line-height:1;color:#444746;font-weight:normal;font-style:normal;white-space:nowrap;">18</div></div><div style="position:absolute;left:0.00px;top:1027.00px;width:69.00px;height:1.50px;background:#cdcfcf;"></div><div style="position:absolute;left:0;top:990.10px;width:68px;height:38.11px;overflow:hidden;"><div style="position:absolute;left:-666.00px;width:1400px;text-align:center;top:10.90px;font-size:16.6px;line-height:1;color:#444746;font-weight:normal;font-style:normal;white-space:nowrap;">19</div></div><div style="position:absolute;left:0.00px;top:1065.00px;width:69.00px;height:1.50px;background:#cdcfcf;"></div><div style="position:absolute;left:0;top:1028.21px;width:68px;height:38.09px;overflow:hidden;"><div style="position:absolute;left:-666.00px;width:1400px;text-align:center;top:10.89px;font-size:16.6px;line-height:1;color:#444746;font-weight:normal;font-style:normal;white-space:nowrap;">20</div></div><div style="position:absolute;left:0.00px;top:1102.00px;width:69.00px;height:1.50px;background:#cdcfcf;"></div><div style="position:absolute;left:0;top:1066.30px;width:68px;height:36.60px;overflow:hidden;"><div style="position:absolute;left:-666.00px;width:1400px;text-align:center;top:10.15px;font-size:16.6px;line-height:1;color:#444746;font-weight:normal;font-style:normal;white-space:nowrap;">21</div></div><div style="position:absolute;left:0.00px;top:1139.00px;width:69.00px;height:1.50px;background:#cdcfcf;"></div><div style="position:absolute;left:0;top:1102.90px;width:68px;height:36.60px;overflow:hidden;"><div style="position:absolute;left:-666.00px;width:1400px;text-align:center;top:10.15px;font-size:16.6px;line-height:1;color:#444746;font-weight:normal;font-style:normal;white-space:nowrap;">22</div></div><div style="position:absolute;left:0.00px;top:1175.00px;width:69.00px;height:1.50px;background:#cdcfcf;"></div><div style="position:absolute;left:0;top:1139.50px;width:68px;height:36.60px;overflow:hidden;"><div style="position:absolute;left:-666.00px;width:1400px;text-align:center;top:10.15px;font-size:16.6px;line-height:1;color:#444746;font-weight:normal;font-style:normal;white-space:nowrap;">23</div></div><div style="position:absolute;left:0.00px;top:1212.00px;width:69.00px;height:1.50px;background:#cdcfcf;"></div><div style="position:absolute;left:0;top:1176.10px;width:68px;height:36.60px;overflow:hidden;"><div style="position:absolute;left:-666.00px;width:1400px;text-align:center;top:10.15px;font-size:16.6px;line-height:1;color:#444746;font-weight:normal;font-style:normal;white-space:nowrap;">24</div></div><div style="position:absolute;left:0.00px;top:1248.00px;width:69.00px;height:1.50px;background:#cdcfcf;"></div><div style="position:absolute;left:0;top:1212.70px;width:68px;height:36.60px;overflow:hidden;"><div style="position:absolute;left:-666.00px;width:1400px;text-align:center;top:10.15px;font-size:16.6px;line-height:1;color:#444746;font-weight:normal;font-style:normal;white-space:nowrap;">25</div></div><div style="position:absolute;left:0.00px;top:1285.00px;width:69.00px;height:1.50px;background:#cdcfcf;"></div><div style="position:absolute;left:0;top:1249.30px;width:68px;height:36.60px;overflow:hidden;"><div style="position:absolute;left:-666.00px;width:1400px;text-align:center;top:10.15px;font-size:16.6px;line-height:1;color:#444746;font-weight:normal;font-style:normal;white-space:nowrap;">26</div></div><div style="position:absolute;left:0.00px;top:1321.00px;width:69.00px;height:1.50px;background:#cdcfcf;"></div><div style="position:absolute;left:0;top:1285.90px;width:68px;height:36.60px;overflow:hidden;"><div style="position:absolute;left:-666.00px;width:1400px;text-align:center;top:10.15px;font-size:16.6px;line-height:1;color:#444746;font-weight:normal;font-style:normal;white-space:nowrap;">27</div></div><div style="position:absolute;left:0.00px;top:1358.00px;width:69.00px;height:1.50px;background:#cdcfcf;"></div><div style="position:absolute;left:0;top:1322.50px;width:68px;height:36.60px;overflow:hidden;"><div style="position:absolute;left:-666.00px;width:1400px;text-align:center;top:10.15px;font-size:16.6px;line-height:1;color:#444746;font-weight:normal;font-style:normal;white-space:nowrap;">28</div></div><div style="position:absolute;left:0.00px;top:1385.00px;width:69.00px;height:1.50px;background:#cdcfcf;"></div><div style="position:absolute;left:0;top:1359.10px;width:68px;height:26.90px;overflow:hidden;"><div style="position:absolute;left:-666.00px;width:1400px;text-align:center;top:10.15px;font-size:16.6px;line-height:1;color:#444746;font-weight:normal;font-style:normal;white-space:nowrap;">29</div></div><div style="position:absolute;left:90.70px;top:248.50px;width:2452.80px;height:84.50px;background:#472092;"></div><div style="position:absolute;left:90.70px;top:333.00px;width:2452.80px;height:56.00px;background:#8560ec;"></div><div style="position:absolute;left:90.70px;top:389.00px;width:2452.80px;height:33.00px;background:#ebe7fb;"></div><div style="position:absolute;left:837.80px;width:1400px;text-align:center;top:272.76px;font-size:36.9px;line-height:1;color:#fff;font-weight:bold;font-style:normal;white-space:nowrap;">FINANZAS EN ORDEN</div><div style="position:absolute;left:837.80px;width:1400px;text-align:center;top:348.45px;font-size:26.4px;line-height:1;color:#fff;font-weight:bold;font-style:normal;white-space:nowrap;">PROYECTOS FREELANCE — Cada trabajo registrado</div><div style="position:absolute;left:837.80px;width:1400px;text-align:center;top:396.02px;font-size:18.4px;line-height:1;color:#6b6b78;font-weight:normal;font-style:italic;white-space:nowrap;">Plantilla #42 de 50 | avanzaconpropositoo.com</div><div style="position:absolute;left:70px;top:248.6px;width:20.7px;height:84.4px;border:2px solid #3b7de9;box-sizing:border-box;"></div><div style="position:absolute;left:84.5px;top:327px;width:14px;height:14px;background:#2a5bd7;border-radius:50%;border:1.6px solid #fff;box-sizing:content-box;margin-left:-1.6px;margin-top:-1.6px;"></div><div style="position:absolute;left:90.70px;top:440.80px;width:2452.80px;height:1.70px;background:#cfd3da;"></div><div style="position:absolute;left:90.70px;top:442.50px;width:2452.80px;height:38.00px;background:#8560ec;"></div><div style="position:absolute;left:91.70px;top:441.50px;width:72.80px;height:39.00px;overflow:hidden;"><div style="position:absolute;left:-663.60px;width:1400px;text-align:center;top:10.46px;font-size:18.5px;line-height:1;color:#fff;font-weight:bold;font-style:normal;white-space:nowrap;">#</div></div><div style="position:absolute;left:166.50px;top:441.50px;width:476.50px;height:39.00px;overflow:hidden;"><div style="position:absolute;left:-461.75px;width:1400px;text-align:center;top:10.46px;font-size:18.5px;line-height:1;color:#fff;font-weight:bold;font-style:normal;white-space:nowrap;">MES</div></div><div style="position:absolute;left:645.00px;top:441.50px;width:367.00px;height:39.00px;overflow:hidden;"><div style="position:absolute;left:-516.50px;width:1400px;text-align:center;top:10.46px;font-size:18.5px;line-height:1;color:#fff;font-weight:bold;font-style:normal;white-space:nowrap;">TOTAL FACTURADO</div></div><div style="position:absolute;left:1014.00px;top:441.50px;width:327.50px;height:39.00px;overflow:hidden;"><div style="position:absolute;left:-536.25px;width:1400px;text-align:center;top:10.46px;font-size:18.5px;line-height:1;color:#fff;font-weight:bold;font-style:normal;white-space:nowrap;">COBRADO</div></div><div style="position:absolute;left:1343.50px;top:441.50px;width:126.00px;height:39.00px;overflow:hidden;"><div style="position:absolute;left:-637.00px;width:1400px;text-align:center;top:10.46px;font-size:18.5px;line-height:1;color:#fff;font-weight:bold;font-style:normal;white-space:nowrap;">PENDIENTE</div></div><div style="position:absolute;left:1471.50px;top:441.50px;width:272.00px;height:39.00px;overflow:hidden;"><div style="position:absolute;left:-564.00px;width:1400px;text-align:center;top:10.46px;font-size:18.5px;line-height:1;color:#fff;font-weight:bold;font-style:normal;white-space:nowrap;">Nº PROYECTOS</div></div><div style="position:absolute;left:1745.50px;top:441.50px;width:126.50px;height:39.00px;overflow:hidden;"><div style="position:absolute;left:-636.75px;width:1400px;text-align:center;top:10.46px;font-size:18.5px;line-height:1;color:#fff;font-weight:bold;font-style:normal;white-space:nowrap;">TICKET PROM.</div></div><div style="position:absolute;left:1874.00px;top:441.50px;width:321.00px;height:39.00px;overflow:hidden;"><div style="position:absolute;left:-539.50px;width:1400px;text-align:center;top:10.46px;font-size:18.5px;line-height:1;color:#fff;font-weight:bold;font-style:normal;white-space:nowrap;">HRS TRABAJADAS</div></div><div style="position:absolute;left:2197.00px;top:441.50px;width:346.50px;height:39.00px;overflow:hidden;"><div style="position:absolute;left:332.50px;top:10.46px;font-size:18.5px;line-height:1;color:#fff;font-weight:bold;font-style:normal;white-space:nowrap;">TASA</div></div><div style="position:absolute;left:90.10px;top:442.50px;width:1.20px;height:37.00px;background:#d2d0e8;"></div><div style="position:absolute;left:164.90px;top:442.50px;width:1.20px;height:37.00px;background:#d2d0e8;"></div><div style="position:absolute;left:643.40px;top:442.50px;width:1.20px;height:37.00px;background:#d2d0e8;"></div><div style="position:absolute;left:1012.40px;top:442.50px;width:1.20px;height:37.00px;background:#d2d0e8;"></div><div style="position:absolute;left:1341.90px;top:442.50px;width:1.20px;height:37.00px;background:#d2d0e8;"></div><div style="position:absolute;left:1469.90px;top:442.50px;width:1.20px;height:37.00px;background:#d2d0e8;"></div><div style="position:absolute;left:1743.90px;top:442.50px;width:1.20px;height:37.00px;background:#d2d0e8;"></div><div style="position:absolute;left:1872.40px;top:442.50px;width:1.20px;height:37.00px;background:#d2d0e8;"></div><div style="position:absolute;left:2195.40px;top:442.50px;width:1.20px;height:37.00px;background:#d2d0e8;"></div><div style="position:absolute;left:2542.90px;top:442.50px;width:1.20px;height:37.00px;background:#d2d0e8;"></div><div style="position:absolute;left:90.70px;top:480.50px;width:74.80px;height:64.50px;background:#f1f2f6;"></div><div style="position:absolute;left:165.50px;top:480.50px;width:478.50px;height:64.50px;background:#fefae9;"></div><div style="position:absolute;left:644.00px;top:480.50px;width:369.00px;height:64.50px;background:#ebe7fb;"></div><div style="position:absolute;left:1013.00px;top:480.50px;width:329.50px;height:64.50px;background:#edfbf4;"></div><div style="position:absolute;left:1342.50px;top:480.50px;width:128.00px;height:64.50px;background:#f8e3e3;"></div><div style="position:absolute;left:1470.50px;top:480.50px;width:274.00px;height:64.50px;background:#ebe7fb;"></div><div style="position:absolute;left:1744.50px;top:480.50px;width:128.50px;height:64.50px;background:#fcf7cc;"></div><div style="position:absolute;left:1873.00px;top:480.50px;width:323.00px;height:64.50px;background:#edf4fc;"></div><div style="position:absolute;left:2196.00px;top:480.50px;width:347.50px;height:64.50px;background:#f1faf6;"></div><div style="position:absolute;left:-571.90px;width:1400px;text-align:center;top:504.40px;font-size:17.5px;line-height:1;color:#1a1a1a;font-weight:bold;font-style:normal;white-space:nowrap;">—</div><div style="position:absolute;left:-295.25px;width:1400px;text-align:center;top:502.89px;font-size:20.6px;line-height:1;color:#000;font-weight:bold;font-style:normal;white-space:nowrap;">Abril 2026</div><div style="position:absolute;left:128.50px;width:1400px;text-align:center;top:499.13px;font-size:28.3px;line-height:1;color:#46208f;font-weight:bold;font-style:normal;white-space:nowrap;">$2.015,00</div><div style="position:absolute;left:477.75px;width:1400px;text-align:center;top:500.10px;font-size:26.3px;line-height:1;color:#24614a;font-weight:bold;font-style:normal;white-space:nowrap;">$1.150,00</div><div style="position:absolute;left:706.50px;width:1400px;text-align:center;top:500.05px;font-size:26.4px;line-height:1;color:#8e2a22;font-weight:bold;font-style:normal;white-space:nowrap;">$265,00</div><div style="position:absolute;left:907.50px;width:1400px;text-align:center;top:501.03px;font-size:24.4px;line-height:1;color:#46208f;font-weight:bold;font-style:normal;white-space:nowrap;">12</div><div style="position:absolute;left:1108.75px;width:1400px;text-align:center;top:501.03px;font-size:24.4px;line-height:1;color:#e8a03a;font-weight:bold;font-style:normal;white-space:nowrap;">$167,92</div><div style="position:absolute;left:1334.50px;width:1400px;text-align:center;top:501.03px;font-size:24.4px;line-height:1;color:#1f3a88;font-weight:bold;font-style:normal;white-space:nowrap;">102 hrs</div><div style="position:absolute;left:89.90px;top:480.50px;width:1.60px;height:64.50px;background:#d6dae2;"></div><div style="position:absolute;left:164.70px;top:480.50px;width:1.60px;height:64.50px;background:#d6dae2;"></div><div style="position:absolute;left:643.20px;top:480.50px;width:1.60px;height:64.50px;background:#d6dae2;"></div><div style="position:absolute;left:1012.20px;top:480.50px;width:1.60px;height:64.50px;background:#d6dae2;"></div><div style="position:absolute;left:1341.70px;top:480.50px;width:1.60px;height:64.50px;background:#d6dae2;"></div><div style="position:absolute;left:1469.70px;top:480.50px;width:1.60px;height:64.50px;background:#d6dae2;"></div><div style="position:absolute;left:1743.70px;top:480.50px;width:1.60px;height:64.50px;background:#d6dae2;"></div><div style="position:absolute;left:1872.20px;top:480.50px;width:1.60px;height:64.50px;background:#d6dae2;"></div><div style="position:absolute;left:2195.20px;top:480.50px;width:1.60px;height:64.50px;background:#d6dae2;"></div><div style="position:absolute;left:2542.70px;top:480.50px;width:1.60px;height:64.50px;background:#d6dae2;"></div><div style="position:absolute;left:89.90px;top:544.20px;width:2453.60px;height:1.60px;background:#d6dae2;"></div><div style="position:absolute;left:643px;top:480px;width:371px;height:66px;border:3px solid #8560ec;box-sizing:border-box;"></div><div style="position:absolute;left:1012px;top:480px;width:332px;height:66px;border:3px solid #8560ec;box-sizing:border-box;"></div><div style="position:absolute;left:1341px;top:480px;width:131px;height:66px;border:3px solid #8560ec;box-sizing:border-box;"></div><div style="position:absolute;left:2195px;top:480px;width:353px;height:66px;border:3px solid #8560ec;box-sizing:border-box;"></div><div style="position:absolute;left:90.70px;top:564.30px;width:2452.80px;height:1.50px;background:#cfd3da;"></div><div style="position:absolute;left:90.70px;top:565.80px;width:74.80px;height:43.20px;background:#8560ec;"></div><div style="position:absolute;left:-571.90px;width:1400px;text-align:center;top:578.26px;font-size:18.5px;line-height:1;color:#fff;font-weight:bold;font-style:normal;white-space:nowrap;">#</div><div style="position:absolute;left:165.50px;top:565.80px;width:478.50px;height:43.20px;background:#8560ec;"></div><div style="position:absolute;left:-295.25px;width:1400px;text-align:center;top:578.26px;font-size:18.5px;line-height:1;color:#fff;font-weight:bold;font-style:normal;white-space:nowrap;">PROYECTO</div><div style="position:absolute;left:644.00px;top:565.80px;width:369.00px;height:43.20px;background:#8560ec;"></div><div style="position:absolute;left:128.50px;width:1400px;text-align:center;top:578.26px;font-size:18.5px;line-height:1;color:#fff;font-weight:bold;font-style:normal;white-space:nowrap;">CLIENTE</div><div style="position:absolute;left:1013.00px;top:565.80px;width:329.50px;height:43.20px;background:#8560ec;"></div><div style="position:absolute;left:477.75px;width:1400px;text-align:center;top:578.26px;font-size:18.5px;line-height:1;color:#fff;font-weight:bold;font-style:normal;white-space:nowrap;">TIPO</div><div style="position:absolute;left:1342.50px;top:565.80px;width:128.00px;height:43.20px;background:#8560ec;"></div><div style="position:absolute;left:706.50px;width:1400px;text-align:center;top:578.26px;font-size:18.5px;line-height:1;color:#fff;font-weight:bold;font-style:normal;white-space:nowrap;">FECHA</div><div style="position:absolute;left:1470.50px;top:565.80px;width:274.00px;height:43.20px;background:#2a5f48;"></div><div style="position:absolute;left:907.50px;width:1400px;text-align:center;top:578.26px;font-size:18.5px;line-height:1;color:#fff;font-weight:bold;font-style:normal;white-space:nowrap;">MONTO ($)</div><div style="position:absolute;left:1744.50px;top:565.80px;width:128.50px;height:43.20px;background:#2a5f48;"></div><div style="position:absolute;left:1108.75px;width:1400px;text-align:center;top:578.26px;font-size:18.5px;line-height:1;color:#fff;font-weight:bold;font-style:normal;white-space:nowrap;">HORAS</div><div style="position:absolute;left:1873.00px;top:565.80px;width:323.00px;height:43.20px;background:#8560ec;"></div><div style="position:absolute;left:1334.50px;width:1400px;text-align:center;top:578.26px;font-size:18.5px;line-height:1;color:#fff;font-weight:bold;font-style:normal;white-space:nowrap;">ESTADO COBRO</div><div style="position:absolute;left:2196.00px;top:565.80px;width:347.50px;height:43.20px;background:#2a5f48;"></div><div style="position:absolute;left:90.10px;top:565.80px;width:1.20px;height:43.20px;background:#d2d0e8;"></div><div style="position:absolute;left:164.90px;top:565.80px;width:1.20px;height:43.20px;background:#d2d0e8;"></div><div style="position:absolute;left:643.40px;top:565.80px;width:1.20px;height:43.20px;background:#d2d0e8;"></div><div style="position:absolute;left:1012.40px;top:565.80px;width:1.20px;height:43.20px;background:#d2d0e8;"></div><div style="position:absolute;left:1341.90px;top:565.80px;width:1.20px;height:43.20px;background:#d2d0e8;"></div><div style="position:absolute;left:1469.90px;top:565.80px;width:1.20px;height:43.20px;background:#d2d0e8;"></div><div style="position:absolute;left:1743.90px;top:565.80px;width:1.20px;height:43.20px;background:#d2d0e8;"></div><div style="position:absolute;left:1872.40px;top:565.80px;width:1.20px;height:43.20px;background:#d2d0e8;"></div><div style="position:absolute;left:2195.40px;top:565.80px;width:1.20px;height:43.20px;background:#d2d0e8;"></div><div style="position:absolute;left:2542.90px;top:565.80px;width:1.20px;height:43.20px;background:#d2d0e8;"></div><div style="position:absolute;left:90.70px;top:609.00px;width:74.80px;height:38.11px;background:#ebe7fb;"></div><div style="position:absolute;left:165.50px;top:609.00px;width:847.50px;height:38.11px;background:#fefbea;"></div><div style="position:absolute;left:1013.00px;top:609.00px;width:329.50px;height:38.11px;background:#f3f0fc;"></div><div style="position:absolute;left:1342.50px;top:609.00px;width:530.50px;height:38.11px;background:#fefbea;"></div><div style="position:absolute;left:1873.00px;top:609.00px;width:323.00px;height:38.11px;background:#ecfbf3;"></div><div style="position:absolute;left:2196.00px;top:609.00px;width:347.50px;height:38.11px;background:#f3f0fc;"></div><div style="position:absolute;left:-571.90px;width:1400px;text-align:center;top:617.99px;font-size:20.6px;line-height:1;color:#46208f;font-weight:bold;font-style:normal;white-space:nowrap;">1</div><div style="position:absolute;left:170.70px;top:618.51px;font-size:20.35px;line-height:1;color:#1a1033;font-weight:bold;font-style:normal;white-space:nowrap;">Gestión redes sociales Abril</div><div style="position:absolute;left:649.20px;top:619.02px;font-size:18.5px;line-height:1;color:#1e1538;font-weight:normal;font-style:normal;white-space:nowrap;">Empresa XYZ</div><div style="position:absolute;left:477.75px;width:1400px;text-align:center;top:619.02px;font-size:18.5px;line-height:1;color:#1e1538;font-weight:normal;font-style:normal;white-space:nowrap;">Retainer mensual</div><div style="position:absolute;left:706.50px;width:1400px;text-align:center;top:619.02px;font-size:18.5px;line-height:1;color:#6b7280;font-weight:normal;font-style:normal;white-space:nowrap;">01/04/2026</div><div style="position:absolute;left:907.50px;width:1400px;text-align:center;top:617.11px;font-size:22.4px;line-height:1;color:#46208f;font-weight:bold;font-style:normal;white-space:nowrap;">$350,00</div><div style="position:absolute;left:1108.75px;width:1400px;text-align:center;top:617.80px;font-size:21px;line-height:1;color:#1f3a88;font-weight:normal;font-style:normal;white-space:nowrap;">20</div><div style="position:absolute;left:1873.00px;top:609.00px;width:323.00px;height:38.11px;display:flex;align-items:center;justify-content:center;"><span style="display:inline-block;width:21.5px;height:21.5px;position:relative;margin-right:10.8px;margin-left:1px;margin-top:-1px;"><svg style="position:absolute;left:0px;top:0px;" width="21.5" height="21.5" viewBox="0 0 20 20" fill="none"><defs><linearGradient id="gc" x1="0" y1="0" x2="0" y2="1"><stop offset="0" stop-color="#7bd35a"/><stop offset="1" stop-color="#3da833"/></linearGradient></defs><rect x="0.5" y="0.5" width="19" height="19" rx="4" fill="url(#gc)"/><path d="M4.8 10.2L8.3 14.2L15.4 4.8" fill="none" stroke="#fff" stroke-width="2.6" stroke-linecap="round" stroke-linejoin="round"/></svg></span><span style="font-size:20.6px;font-weight:bold;color:#1f5c3f;line-height:1;margin-top:1px;">Cobrado</span></div><div style="position:absolute;left:2202.50px;top:619.07px;font-size:18.4px;line-height:1;color:#6b7280;font-weight:normal;font-style:italic;white-space:nowrap;">Contrato mensual</div><div style="position:absolute;left:90.70px;top:647.11px;width:74.80px;height:38.11px;background:#ebe7fb;"></div><div style="position:absolute;left:165.50px;top:647.11px;width:847.50px;height:38.11px;background:#fefbea;"></div><div style="position:absolute;left:1013.00px;top:647.11px;width:329.50px;height:38.11px;background:#eef5fd;"></div><div style="position:absolute;left:1342.50px;top:647.11px;width:530.50px;height:38.11px;background:#fefbea;"></div><div style="position:absolute;left:1873.00px;top:647.11px;width:323.00px;height:38.11px;background:#ecfbf3;"></div><div style="position:absolute;left:2196.00px;top:647.11px;width:347.50px;height:38.11px;background:#eef5fd;"></div><div style="position:absolute;left:-571.90px;width:1400px;text-align:center;top:656.10px;font-size:20.6px;line-height:1;color:#46208f;font-weight:bold;font-style:normal;white-space:nowrap;">2</div><div style="position:absolute;left:170.70px;top:656.62px;font-size:20.35px;line-height:1;color:#1a1033;font-weight:bold;font-style:normal;white-space:nowrap;">Diseño logo marca personal</div><div style="position:absolute;left:649.20px;top:657.13px;font-size:18.5px;line-height:1;color:#1e1538;font-weight:normal;font-style:normal;white-space:nowrap;">Emprendedora Ana</div><div style="position:absolute;left:477.75px;width:1400px;text-align:center;top:657.13px;font-size:18.5px;line-height:1;color:#1e1538;font-weight:normal;font-style:normal;white-space:nowrap;">Diseño gráfico</div><div style="position:absolute;left:706.50px;width:1400px;text-align:center;top:657.13px;font-size:18.5px;line-height:1;color:#6b7280;font-weight:normal;font-style:normal;white-space:nowrap;">03/04/2026</div><div style="position:absolute;left:907.50px;width:1400px;text-align:center;top:655.22px;font-size:22.4px;line-height:1;color:#46208f;font-weight:bold;font-style:normal;white-space:nowrap;">$120,00</div><div style="position:absolute;left:1108.75px;width:1400px;text-align:center;top:655.91px;font-size:21px;line-height:1;color:#1f3a88;font-weight:normal;font-style:normal;white-space:nowrap;">6</div><div style="position:absolute;left:1873.00px;top:647.11px;width:323.00px;height:38.11px;display:flex;align-items:center;justify-content:center;"><span style="display:inline-block;width:21.5px;height:21.5px;position:relative;margin-right:10.8px;margin-left:1px;margin-top:-1px;"><svg style="position:absolute;left:0px;top:0px;" width="21.5" height="21.5" viewBox="0 0 20 20" fill="none"><defs><linearGradient id="gc" x1="0" y1="0" x2="0" y2="1"><stop offset="0" stop-color="#7bd35a"/><stop offset="1" stop-color="#3da833"/></linearGradient></defs><rect x="0.5" y="0.5" width="19" height="19" rx="4" fill="url(#gc)"/><path d="M4.8 10.2L8.3 14.2L15.4 4.8" fill="none" stroke="#fff" stroke-width="2.6" stroke-linecap="round" stroke-linejoin="round"/></svg></span><span style="font-size:20.6px;font-weight:bold;color:#1f5c3f;line-height:1;margin-top:1px;">Cobrado</span></div><div style="position:absolute;left:2202.50px;top:657.18px;font-size:18.4px;line-height:1;color:#6b7280;font-weight:normal;font-style:italic;white-space:nowrap;">Logo + variantes</div><div style="position:absolute;left:90.70px;top:685.22px;width:74.80px;height:38.11px;background:#ebe7fb;"></div><div style="position:absolute;left:165.50px;top:685.22px;width:847.50px;height:38.11px;background:#fefbea;"></div><div style="position:absolute;left:1013.00px;top:685.22px;width:329.50px;height:38.11px;background:#fbf1cc;"></div><div style="position:absolute;left:1342.50px;top:685.22px;width:530.50px;height:38.11px;background:#fefbea;"></div><div style="position:absolute;left:1873.00px;top:685.22px;width:323.00px;height:38.11px;background:#ecfbf3;"></div><div style="position:absolute;left:2196.00px;top:685.22px;width:347.50px;height:38.11px;background:#fbf1cc;"></div><div style="position:absolute;left:-571.90px;width:1400px;text-align:center;top:694.21px;font-size:20.6px;line-height:1;color:#46208f;font-weight:bold;font-style:normal;white-space:nowrap;">3</div><div style="position:absolute;left:170.70px;top:694.73px;font-size:20.35px;line-height:1;color:#1a1033;font-weight:bold;font-style:normal;white-space:nowrap;">Manejo Meta Ads — marzo</div><div style="position:absolute;left:649.20px;top:695.24px;font-size:18.5px;line-height:1;color:#1e1538;font-weight:normal;font-style:normal;white-space:nowrap;">Negocio Don Carlos</div><div style="position:absolute;left:477.75px;width:1400px;text-align:center;top:695.24px;font-size:18.5px;line-height:1;color:#1e1538;font-weight:normal;font-style:normal;white-space:nowrap;">Publicidad digital</div><div style="position:absolute;left:706.50px;width:1400px;text-align:center;top:695.24px;font-size:18.5px;line-height:1;color:#6b7280;font-weight:normal;font-style:normal;white-space:nowrap;">04/04/2026</div><div style="position:absolute;left:907.50px;width:1400px;text-align:center;top:693.33px;font-size:22.4px;line-height:1;color:#46208f;font-weight:bold;font-style:normal;white-space:nowrap;">$200,00</div><div style="position:absolute;left:1108.75px;width:1400px;text-align:center;top:694.02px;font-size:21px;line-height:1;color:#1f3a88;font-weight:normal;font-style:normal;white-space:nowrap;">8</div><div style="position:absolute;left:1873.00px;top:685.22px;width:323.00px;height:38.11px;display:flex;align-items:center;justify-content:center;"><span style="display:inline-block;width:21.5px;height:21.5px;position:relative;margin-right:10.8px;margin-left:1px;margin-top:-1px;"><svg style="position:absolute;left:0px;top:0px;" width="21.5" height="21.5" viewBox="0 0 20 20" fill="none"><defs><linearGradient id="gc" x1="0" y1="0" x2="0" y2="1"><stop offset="0" stop-color="#7bd35a"/><stop offset="1" stop-color="#3da833"/></linearGradient></defs><rect x="0.5" y="0.5" width="19" height="19" rx="4" fill="url(#gc)"/><path d="M4.8 10.2L8.3 14.2L15.4 4.8" fill="none" stroke="#fff" stroke-width="2.6" stroke-linecap="round" stroke-linejoin="round"/></svg></span><span style="font-size:20.6px;font-weight:bold;color:#1f5c3f;line-height:1;margin-top:1px;">Cobrado</span></div><div style="position:absolute;left:2202.50px;top:695.29px;font-size:18.4px;line-height:1;color:#6b7280;font-weight:normal;font-style:italic;white-space:nowrap;">Gestión campaña</div><div style="position:absolute;left:90.70px;top:723.33px;width:74.80px;height:38.11px;background:#ebe7fb;"></div><div style="position:absolute;left:165.50px;top:723.33px;width:847.50px;height:38.11px;background:#fefbea;"></div><div style="position:absolute;left:1013.00px;top:723.33px;width:329.50px;height:38.11px;background:#fef8c8;"></div><div style="position:absolute;left:1342.50px;top:723.33px;width:530.50px;height:38.11px;background:#fefbea;"></div><div style="position:absolute;left:1873.00px;top:723.33px;width:323.00px;height:38.11px;background:#ecfbf3;"></div><div style="position:absolute;left:2196.00px;top:723.33px;width:347.50px;height:38.11px;background:#fef8c8;"></div><div style="position:absolute;left:-571.90px;width:1400px;text-align:center;top:732.32px;font-size:20.6px;line-height:1;color:#46208f;font-weight:bold;font-style:normal;white-space:nowrap;">4</div><div style="position:absolute;left:170.70px;top:732.84px;font-size:20.35px;line-height:1;color:#1a1033;font-weight:bold;font-style:normal;white-space:nowrap;">Copywriting páginas de venta x3</div><div style="position:absolute;left:649.20px;top:733.35px;font-size:18.5px;line-height:1;color:#1e1538;font-weight:normal;font-style:normal;white-space:nowrap;">Cliente nuevo</div><div style="position:absolute;left:477.75px;width:1400px;text-align:center;top:733.35px;font-size:18.5px;line-height:1;color:#1e1538;font-weight:normal;font-style:normal;white-space:nowrap;">Copywriting</div><div style="position:absolute;left:706.50px;width:1400px;text-align:center;top:733.35px;font-size:18.5px;line-height:1;color:#6b7280;font-weight:normal;font-style:normal;white-space:nowrap;">05/04/2026</div><div style="position:absolute;left:907.50px;width:1400px;text-align:center;top:731.44px;font-size:22.4px;line-height:1;color:#46208f;font-weight:bold;font-style:normal;white-space:nowrap;">$180,00</div><div style="position:absolute;left:1108.75px;width:1400px;text-align:center;top:732.13px;font-size:21px;line-height:1;color:#1f3a88;font-weight:normal;font-style:normal;white-space:nowrap;">10</div><div style="position:absolute;left:1873.00px;top:723.33px;width:323.00px;height:38.11px;display:flex;align-items:center;justify-content:center;"><span style="display:inline-block;width:21.5px;height:21.5px;position:relative;margin-right:10.8px;margin-left:1px;margin-top:-1px;"><svg style="position:absolute;left:0px;top:0px;" width="21.5" height="21.5" viewBox="0 0 20 20" fill="none"><defs><linearGradient id="gc" x1="0" y1="0" x2="0" y2="1"><stop offset="0" stop-color="#7bd35a"/><stop offset="1" stop-color="#3da833"/></linearGradient></defs><rect x="0.5" y="0.5" width="19" height="19" rx="4" fill="url(#gc)"/><path d="M4.8 10.2L8.3 14.2L15.4 4.8" fill="none" stroke="#fff" stroke-width="2.6" stroke-linecap="round" stroke-linejoin="round"/></svg></span><span style="font-size:20.6px;font-weight:bold;color:#1f5c3f;line-height:1;margin-top:1px;">Cobrado</span></div><div style="position:absolute;left:2202.50px;top:733.40px;font-size:18.4px;line-height:1;color:#6b7280;font-weight:normal;font-style:italic;white-space:nowrap;">3 páginas ventas</div><div style="position:absolute;left:90.70px;top:761.44px;width:74.80px;height:38.11px;background:#ebe7fb;"></div><div style="position:absolute;left:165.50px;top:761.44px;width:847.50px;height:38.11px;background:#fefbea;"></div><div style="position:absolute;left:1013.00px;top:761.44px;width:329.50px;height:38.11px;background:#edfbf3;"></div><div style="position:absolute;left:1342.50px;top:761.44px;width:530.50px;height:38.11px;background:#fefbea;"></div><div style="position:absolute;left:1873.00px;top:761.44px;width:323.00px;height:38.11px;background:#f9e2e2;"></div><div style="position:absolute;left:2196.00px;top:761.44px;width:347.50px;height:38.11px;background:#edfbf3;"></div><div style="position:absolute;left:-571.90px;width:1400px;text-align:center;top:770.43px;font-size:20.6px;line-height:1;color:#46208f;font-weight:bold;font-style:normal;white-space:nowrap;">5</div><div style="position:absolute;left:170.70px;top:770.95px;font-size:20.35px;line-height:1;color:#1a1033;font-weight:bold;font-style:normal;white-space:nowrap;">Consultoría finanzas personales</div><div style="position:absolute;left:649.20px;top:771.46px;font-size:18.5px;line-height:1;color:#1e1538;font-weight:normal;font-style:normal;white-space:nowrap;">Amiga Patricia</div><div style="position:absolute;left:477.75px;width:1400px;text-align:center;top:771.46px;font-size:18.5px;line-height:1;color:#1e1538;font-weight:normal;font-style:normal;white-space:nowrap;">Consultoría</div><div style="position:absolute;left:706.50px;width:1400px;text-align:center;top:771.46px;font-size:18.5px;line-height:1;color:#6b7280;font-weight:normal;font-style:normal;white-space:nowrap;">08/04/2026</div><div style="position:absolute;left:907.50px;width:1400px;text-align:center;top:769.55px;font-size:22.4px;line-height:1;color:#46208f;font-weight:bold;font-style:normal;white-space:nowrap;">$80,00</div><div style="position:absolute;left:1108.75px;width:1400px;text-align:center;top:770.24px;font-size:21px;line-height:1;color:#1f3a88;font-weight:normal;font-style:normal;white-space:nowrap;">2</div><div style="position:absolute;left:1873.00px;top:761.44px;width:323.00px;height:38.11px;display:flex;align-items:center;justify-content:center;"><span style="display:inline-block;width:15px;height:21.5px;position:relative;margin-right:14.2px;margin-left:2px;margin-top:-1px;"><svg style="position:absolute;left:0px;top:0px;" width="15" height="21" viewBox="0 0 15 21" fill="none"><rect x="0.5" y="0" width="14" height="2.6" rx="1" fill="#5a3a22"/><rect x="0.5" y="18.4" width="14" height="2.6" rx="1" fill="#5a3a22"/><path d="M2.5 2.6H12.5C12.5 7 8.8 8.8 8.2 10.5C8.8 12.2 12.5 14 12.5 18.4H2.5C2.5 14 6.2 12.2 6.8 10.5C6.2 8.8 2.5 7 2.5 2.6Z" fill="#e6e9ee" stroke="#9aa3ad" stroke-width="0.8"/><path d="M4.2 17.6C5 15 7.5 14.2 7.5 12.2C7.5 14.2 10 15 10.8 17.6Z" fill="#c98a3c"/><path d="M4.6 5.2H10.4C9.6 7 8 7.8 7.5 9C7 7.8 5.4 7 4.6 5.2Z" fill="#d9a155"/></svg></span><span style="font-size:20.6px;font-weight:bold;color:#9b1f1f;line-height:1;margin-top:1px;">Pendiente</span></div><div style="position:absolute;left:2202.50px;top:771.51px;font-size:18.4px;line-height:1;color:#6b7280;font-weight:normal;font-style:italic;white-space:nowrap;">1 sesión 2 horas</div><div style="position:absolute;left:90.70px;top:799.55px;width:74.80px;height:38.11px;background:#ebe7fb;"></div><div style="position:absolute;left:165.50px;top:799.55px;width:847.50px;height:38.11px;background:#fefbea;"></div><div style="position:absolute;left:1013.00px;top:799.55px;width:329.50px;height:38.11px;background:#f3f4f6;"></div><div style="position:absolute;left:1342.50px;top:799.55px;width:530.50px;height:38.11px;background:#fefbea;"></div><div style="position:absolute;left:1873.00px;top:799.55px;width:323.00px;height:38.11px;background:#ecfbf3;"></div><div style="position:absolute;left:2196.00px;top:799.55px;width:347.50px;height:38.11px;background:#f3f4f6;"></div><div style="position:absolute;left:-571.90px;width:1400px;text-align:center;top:808.54px;font-size:20.6px;line-height:1;color:#46208f;font-weight:bold;font-style:normal;white-space:nowrap;">6</div><div style="position:absolute;left:170.70px;top:809.06px;font-size:20.35px;line-height:1;color:#1a1033;font-weight:bold;font-style:normal;white-space:nowrap;">Soporte técnico web</div><div style="position:absolute;left:649.20px;top:809.57px;font-size:18.5px;line-height:1;color:#1e1538;font-weight:normal;font-style:normal;white-space:nowrap;">Tienda en línea</div><div style="position:absolute;left:477.75px;width:1400px;text-align:center;top:809.57px;font-size:18.5px;line-height:1;color:#1e1538;font-weight:normal;font-style:normal;white-space:nowrap;">Técnico/TI</div><div style="position:absolute;left:706.50px;width:1400px;text-align:center;top:809.57px;font-size:18.5px;line-height:1;color:#6b7280;font-weight:normal;font-style:normal;white-space:nowrap;">10/04/2026</div><div style="position:absolute;left:907.50px;width:1400px;text-align:center;top:807.66px;font-size:22.4px;line-height:1;color:#46208f;font-weight:bold;font-style:normal;white-space:nowrap;">$60,00</div><div style="position:absolute;left:1108.75px;width:1400px;text-align:center;top:808.35px;font-size:21px;line-height:1;color:#1f3a88;font-weight:normal;font-style:normal;white-space:nowrap;">3</div><div style="position:absolute;left:1873.00px;top:799.55px;width:323.00px;height:38.11px;display:flex;align-items:center;justify-content:center;"><span style="display:inline-block;width:21.5px;height:21.5px;position:relative;margin-right:10.8px;margin-left:1px;margin-top:-1px;"><svg style="position:absolute;left:0px;top:0px;" width="21.5" height="21.5" viewBox="0 0 20 20" fill="none"><defs><linearGradient id="gc" x1="0" y1="0" x2="0" y2="1"><stop offset="0" stop-color="#7bd35a"/><stop offset="1" stop-color="#3da833"/></linearGradient></defs><rect x="0.5" y="0.5" width="19" height="19" rx="4" fill="url(#gc)"/><path d="M4.8 10.2L8.3 14.2L15.4 4.8" fill="none" stroke="#fff" stroke-width="2.6" stroke-linecap="round" stroke-linejoin="round"/></svg></span><span style="font-size:20.6px;font-weight:bold;color:#1f5c3f;line-height:1;margin-top:1px;">Cobrado</span></div><div style="position:absolute;left:2202.50px;top:809.62px;font-size:18.4px;line-height:1;color:#6b7280;font-weight:normal;font-style:italic;white-space:nowrap;">Fixes WordPress</div><div style="position:absolute;left:90.70px;top:837.66px;width:74.80px;height:38.11px;background:#ebe7fb;"></div><div style="position:absolute;left:165.50px;top:837.66px;width:847.50px;height:38.11px;background:#fefbea;"></div><div style="position:absolute;left:1013.00px;top:837.66px;width:329.50px;height:38.11px;background:#f0fcf7;"></div><div style="position:absolute;left:1342.50px;top:837.66px;width:530.50px;height:38.11px;background:#fefbea;"></div><div style="position:absolute;left:1873.00px;top:837.66px;width:323.00px;height:38.11px;background:#ecfbf3;"></div><div style="position:absolute;left:2196.00px;top:837.66px;width:347.50px;height:38.11px;background:#f0fcf7;"></div><div style="position:absolute;left:-571.90px;width:1400px;text-align:center;top:846.65px;font-size:20.6px;line-height:1;color:#46208f;font-weight:bold;font-style:normal;white-space:nowrap;">7</div><div style="position:absolute;left:170.70px;top:847.17px;font-size:20.35px;line-height:1;color:#1a1033;font-weight:bold;font-style:normal;white-space:nowrap;">Redacción newsletter mensual</div><div style="position:absolute;left:649.20px;top:847.68px;font-size:18.5px;line-height:1;color:#1e1538;font-weight:normal;font-style:normal;white-space:nowrap;">Empresa Moda PTY</div><div style="position:absolute;left:477.75px;width:1400px;text-align:center;top:847.68px;font-size:18.5px;line-height:1;color:#1e1538;font-weight:normal;font-style:normal;white-space:nowrap;">Redacción</div><div style="position:absolute;left:706.50px;width:1400px;text-align:center;top:847.68px;font-size:18.5px;line-height:1;color:#6b7280;font-weight:normal;font-style:normal;white-space:nowrap;">12/04/2026</div><div style="position:absolute;left:907.50px;width:1400px;text-align:center;top:845.77px;font-size:22.4px;line-height:1;color:#46208f;font-weight:bold;font-style:normal;white-space:nowrap;">$90,00</div><div style="position:absolute;left:1108.75px;width:1400px;text-align:center;top:846.46px;font-size:21px;line-height:1;color:#1f3a88;font-weight:normal;font-style:normal;white-space:nowrap;">4</div><div style="position:absolute;left:1873.00px;top:837.66px;width:323.00px;height:38.11px;display:flex;align-items:center;justify-content:center;"><span style="display:inline-block;width:21.5px;height:21.5px;position:relative;margin-right:10.8px;margin-left:1px;margin-top:-1px;"><svg style="position:absolute;left:0px;top:0px;" width="21.5" height="21.5" viewBox="0 0 20 20" fill="none"><defs><linearGradient id="gc" x1="0" y1="0" x2="0" y2="1"><stop offset="0" stop-color="#7bd35a"/><stop offset="1" stop-color="#3da833"/></linearGradient></defs><rect x="0.5" y="0.5" width="19" height="19" rx="4" fill="url(#gc)"/><path d="M4.8 10.2L8.3 14.2L15.4 4.8" fill="none" stroke="#fff" stroke-width="2.6" stroke-linecap="round" stroke-linejoin="round"/></svg></span><span style="font-size:20.6px;font-weight:bold;color:#1f5c3f;line-height:1;margin-top:1px;">Cobrado</span></div><div style="position:absolute;left:2202.50px;top:847.73px;font-size:18.4px;line-height:1;color:#6b7280;font-weight:normal;font-style:italic;white-space:nowrap;">4 emails</div><div style="position:absolute;left:90.70px;top:875.77px;width:74.80px;height:38.11px;background:#ebe7fb;"></div><div style="position:absolute;left:165.50px;top:875.77px;width:847.50px;height:38.11px;background:#fefbea;"></div><div style="position:absolute;left:1013.00px;top:875.77px;width:329.50px;height:38.11px;background:#eef5fd;"></div><div style="position:absolute;left:1342.50px;top:875.77px;width:530.50px;height:38.11px;background:#fefbea;"></div><div style="position:absolute;left:1873.00px;top:875.77px;width:323.00px;height:38.11px;background:#f9e2e2;"></div><div style="position:absolute;left:2196.00px;top:875.77px;width:347.50px;height:38.11px;background:#eef5fd;"></div><div style="position:absolute;left:-571.90px;width:1400px;text-align:center;top:884.76px;font-size:20.6px;line-height:1;color:#46208f;font-weight:bold;font-style:normal;white-space:nowrap;">8</div><div style="position:absolute;left:170.70px;top:885.28px;font-size:20.35px;line-height:1;color:#1a1033;font-weight:bold;font-style:normal;white-space:nowrap;">Diseño banners redes sociales</div><div style="position:absolute;left:649.20px;top:885.79px;font-size:18.5px;line-height:1;color:#1e1538;font-weight:normal;font-style:normal;white-space:nowrap;">Rosa Spa &amp; Beauty</div><div style="position:absolute;left:477.75px;width:1400px;text-align:center;top:885.79px;font-size:18.5px;line-height:1;color:#1e1538;font-weight:normal;font-style:normal;white-space:nowrap;">Diseño gráfico</div><div style="position:absolute;left:706.50px;width:1400px;text-align:center;top:885.79px;font-size:18.5px;line-height:1;color:#6b7280;font-weight:normal;font-style:normal;white-space:nowrap;">14/04/2026</div><div style="position:absolute;left:907.50px;width:1400px;text-align:center;top:883.88px;font-size:22.4px;line-height:1;color:#46208f;font-weight:bold;font-style:normal;white-space:nowrap;">$110,00</div><div style="position:absolute;left:1108.75px;width:1400px;text-align:center;top:884.57px;font-size:21px;line-height:1;color:#1f3a88;font-weight:normal;font-style:normal;white-space:nowrap;">5</div><div style="position:absolute;left:1873.00px;top:875.77px;width:323.00px;height:38.11px;display:flex;align-items:center;justify-content:center;"><span style="display:inline-block;width:15px;height:21.5px;position:relative;margin-right:14.2px;margin-left:2px;margin-top:-1px;"><svg style="position:absolute;left:0px;top:0px;" width="15" height="21" viewBox="0 0 15 21" fill="none"><rect x="0.5" y="0" width="14" height="2.6" rx="1" fill="#5a3a22"/><rect x="0.5" y="18.4" width="14" height="2.6" rx="1" fill="#5a3a22"/><path d="M2.5 2.6H12.5C12.5 7 8.8 8.8 8.2 10.5C8.8 12.2 12.5 14 12.5 18.4H2.5C2.5 14 6.2 12.2 6.8 10.5C6.2 8.8 2.5 7 2.5 2.6Z" fill="#e6e9ee" stroke="#9aa3ad" stroke-width="0.8"/><path d="M4.2 17.6C5 15 7.5 14.2 7.5 12.2C7.5 14.2 10 15 10.8 17.6Z" fill="#c98a3c"/><path d="M4.6 5.2H10.4C9.6 7 8 7.8 7.5 9C7 7.8 5.4 7 4.6 5.2Z" fill="#d9a155"/></svg></span><span style="font-size:20.6px;font-weight:bold;color:#9b1f1f;line-height:1;margin-top:1px;">Pendiente</span></div><div style="position:absolute;left:2202.50px;top:885.84px;font-size:18.4px;line-height:1;color:#6b7280;font-weight:normal;font-style:italic;white-space:nowrap;">10 banners</div><div style="position:absolute;left:90.70px;top:913.88px;width:74.80px;height:38.11px;background:#ebe7fb;"></div><div style="position:absolute;left:165.50px;top:913.88px;width:847.50px;height:38.11px;background:#fefbea;"></div><div style="position:absolute;left:1013.00px;top:913.88px;width:329.50px;height:38.11px;background:#f9e2e2;"></div><div style="position:absolute;left:1342.50px;top:913.88px;width:530.50px;height:38.11px;background:#fefbea;"></div><div style="position:absolute;left:1873.00px;top:913.88px;width:323.00px;height:38.11px;background:#fdf3cc;"></div><div style="position:absolute;left:2196.00px;top:913.88px;width:347.50px;height:38.11px;background:#f9e2e2;"></div><div style="position:absolute;left:-571.90px;width:1400px;text-align:center;top:922.87px;font-size:20.6px;line-height:1;color:#46208f;font-weight:bold;font-style:normal;white-space:nowrap;">9</div><div style="position:absolute;left:170.70px;top:923.39px;font-size:20.35px;line-height:1;color:#1a1033;font-weight:bold;font-style:normal;white-space:nowrap;">Estrategia de contenido 3 meses</div><div style="position:absolute;left:649.20px;top:923.90px;font-size:18.5px;line-height:1;color:#1e1538;font-weight:normal;font-style:normal;white-space:nowrap;">Coach Empresarial</div><div style="position:absolute;left:477.75px;width:1400px;text-align:center;top:923.90px;font-size:18.5px;line-height:1;color:#1e1538;font-weight:normal;font-style:normal;white-space:nowrap;">Estrategia</div><div style="position:absolute;left:706.50px;width:1400px;text-align:center;top:923.90px;font-size:18.5px;line-height:1;color:#6b7280;font-weight:normal;font-style:normal;white-space:nowrap;">15/04/2026</div><div style="position:absolute;left:907.50px;width:1400px;text-align:center;top:921.99px;font-size:22.4px;line-height:1;color:#46208f;font-weight:bold;font-style:normal;white-space:nowrap;">$250,00</div><div style="position:absolute;left:1108.75px;width:1400px;text-align:center;top:922.68px;font-size:21px;line-height:1;color:#1f3a88;font-weight:normal;font-style:normal;white-space:nowrap;">12</div><div style="position:absolute;left:1873.00px;top:913.88px;width:323.00px;height:38.11px;display:flex;align-items:center;justify-content:center;"><span style="display:inline-block;width:20.5px;height:21.5px;position:relative;margin-right:10.8px;margin-left:0px;margin-top:-1px;"><svg style="position:absolute;left:0px;top:0px;" width="20.5" height="20.5" viewBox="0 0 20 20" fill="none"><defs><linearGradient id="gb" x1="0" y1="0" x2="0" y2="1"><stop offset="0" stop-color="#8fb0e0"/><stop offset="1" stop-color="#4f79c4"/></linearGradient></defs><rect x="0.5" y="0.5" width="19" height="19" rx="4" fill="url(#gb)"/><path d="M15 8.5A5.3 5.3 0 0 0 5.3 7.5" fill="none" stroke="#fff" stroke-width="2"/><path d="M5 11.5A5.3 5.3 0 0 0 14.7 12.5" fill="none" stroke="#fff" stroke-width="2"/><path d="M3 5.5L6.5 4.5L6.5 9Z" fill="#fff"/><path d="M17 14.5L13.5 15.5L13.5 11Z" fill="#fff"/></svg></span><span style="font-size:20.6px;font-weight:bold;color:#8a4513;line-height:1;margin-top:1px;">Anticipo</span></div><div style="position:absolute;left:2202.50px;top:923.95px;font-size:18.4px;line-height:1;color:#6b7280;font-weight:normal;font-style:italic;white-space:nowrap;">Plan detallado</div><div style="position:absolute;left:90.70px;top:951.99px;width:74.80px;height:38.11px;background:#ebe7fb;"></div><div style="position:absolute;left:165.50px;top:951.99px;width:847.50px;height:38.11px;background:#fefbea;"></div><div style="position:absolute;left:1013.00px;top:951.99px;width:329.50px;height:38.11px;background:#f3f0fc;"></div><div style="position:absolute;left:1342.50px;top:951.99px;width:530.50px;height:38.11px;background:#fefbea;"></div><div style="position:absolute;left:1873.00px;top:951.99px;width:323.00px;height:38.11px;background:#fdf3cc;"></div><div style="position:absolute;left:2196.00px;top:951.99px;width:347.50px;height:38.11px;background:#f3f0fc;"></div><div style="position:absolute;left:-571.90px;width:1400px;text-align:center;top:960.98px;font-size:20.6px;line-height:1;color:#46208f;font-weight:bold;font-style:normal;white-space:nowrap;">10</div><div style="position:absolute;left:170.70px;top:961.50px;font-size:20.35px;line-height:1;color:#1a1033;font-weight:bold;font-style:normal;white-space:nowrap;">Gestión redes sociales Mayo</div><div style="position:absolute;left:649.20px;top:962.01px;font-size:18.5px;line-height:1;color:#1e1538;font-weight:normal;font-style:normal;white-space:nowrap;">Empresa XYZ</div><div style="position:absolute;left:477.75px;width:1400px;text-align:center;top:962.01px;font-size:18.5px;line-height:1;color:#1e1538;font-weight:normal;font-style:normal;white-space:nowrap;">Retainer mensual</div><div style="position:absolute;left:706.50px;width:1400px;text-align:center;top:962.01px;font-size:18.5px;line-height:1;color:#6b7280;font-weight:normal;font-style:normal;white-space:nowrap;">18/04/2026</div><div style="position:absolute;left:907.50px;width:1400px;text-align:center;top:960.10px;font-size:22.4px;line-height:1;color:#46208f;font-weight:bold;font-style:normal;white-space:nowrap;">$350,00</div><div style="position:absolute;left:1108.75px;width:1400px;text-align:center;top:960.79px;font-size:21px;line-height:1;color:#1f3a88;font-weight:normal;font-style:normal;white-space:nowrap;">20</div><div style="position:absolute;left:1873.00px;top:951.99px;width:323.00px;height:38.11px;display:flex;align-items:center;justify-content:center;"><span style="display:inline-block;width:20.5px;height:21.5px;position:relative;margin-right:10.8px;margin-left:0px;margin-top:-1px;"><svg style="position:absolute;left:0px;top:0px;" width="20.5" height="20.5" viewBox="0 0 20 20" fill="none"><defs><linearGradient id="gb" x1="0" y1="0" x2="0" y2="1"><stop offset="0" stop-color="#8fb0e0"/><stop offset="1" stop-color="#4f79c4"/></linearGradient></defs><rect x="0.5" y="0.5" width="19" height="19" rx="4" fill="url(#gb)"/><path d="M15 8.5A5.3 5.3 0 0 0 5.3 7.5" fill="none" stroke="#fff" stroke-width="2"/><path d="M5 11.5A5.3 5.3 0 0 0 14.7 12.5" fill="none" stroke="#fff" stroke-width="2"/><path d="M3 5.5L6.5 4.5L6.5 9Z" fill="#fff"/><path d="M17 14.5L13.5 15.5L13.5 11Z" fill="#fff"/></svg></span><span style="font-size:20.6px;font-weight:bold;color:#8a4513;line-height:1;margin-top:1px;">Anticipo</span></div><div style="position:absolute;left:2202.50px;top:962.06px;font-size:18.4px;line-height:1;color:#6b7280;font-weight:normal;font-style:italic;white-space:nowrap;">Anticipo recibido</div><div style="position:absolute;left:90.70px;top:990.10px;width:74.80px;height:38.11px;background:#ebe7fb;"></div><div style="position:absolute;left:165.50px;top:990.10px;width:847.50px;height:38.11px;background:#fefbea;"></div><div style="position:absolute;left:1013.00px;top:990.10px;width:329.50px;height:38.11px;background:#eff6ff;"></div><div style="position:absolute;left:1342.50px;top:990.10px;width:530.50px;height:38.11px;background:#fefbea;"></div><div style="position:absolute;left:1873.00px;top:990.10px;width:323.00px;height:38.11px;background:#ecfbf3;"></div><div style="position:absolute;left:2196.00px;top:990.10px;width:347.50px;height:38.11px;background:#eff6ff;"></div><div style="position:absolute;left:-571.90px;width:1400px;text-align:center;top:999.09px;font-size:20.6px;line-height:1;color:#46208f;font-weight:bold;font-style:normal;white-space:nowrap;">11</div><div style="position:absolute;left:170.70px;top:999.61px;font-size:20.35px;line-height:1;color:#1a1033;font-weight:bold;font-style:normal;white-space:nowrap;">Edición video testimonios</div><div style="position:absolute;left:649.20px;top:1000.12px;font-size:18.5px;line-height:1;color:#1e1538;font-weight:normal;font-style:normal;white-space:nowrap;">Cliente USA remoto</div><div style="position:absolute;left:477.75px;width:1400px;text-align:center;top:1000.12px;font-size:18.5px;line-height:1;color:#1e1538;font-weight:normal;font-style:normal;white-space:nowrap;">Video/Multimedia</div><div style="position:absolute;left:706.50px;width:1400px;text-align:center;top:1000.12px;font-size:18.5px;line-height:1;color:#6b7280;font-weight:normal;font-style:normal;white-space:nowrap;">20/04/2026</div><div style="position:absolute;left:907.50px;width:1400px;text-align:center;top:998.21px;font-size:22.4px;line-height:1;color:#46208f;font-weight:bold;font-style:normal;white-space:nowrap;">$150,00</div><div style="position:absolute;left:1108.75px;width:1400px;text-align:center;top:998.90px;font-size:21px;line-height:1;color:#1f3a88;font-weight:normal;font-style:normal;white-space:nowrap;">8</div><div style="position:absolute;left:1873.00px;top:990.10px;width:323.00px;height:38.11px;display:flex;align-items:center;justify-content:center;"><span style="display:inline-block;width:21.5px;height:21.5px;position:relative;margin-right:10.8px;margin-left:1px;margin-top:-1px;"><svg style="position:absolute;left:0px;top:0px;" width="21.5" height="21.5" viewBox="0 0 20 20" fill="none"><defs><linearGradient id="gc" x1="0" y1="0" x2="0" y2="1"><stop offset="0" stop-color="#7bd35a"/><stop offset="1" stop-color="#3da833"/></linearGradient></defs><rect x="0.5" y="0.5" width="19" height="19" rx="4" fill="url(#gc)"/><path d="M4.8 10.2L8.3 14.2L15.4 4.8" fill="none" stroke="#fff" stroke-width="2.6" stroke-linecap="round" stroke-linejoin="round"/></svg></span><span style="font-size:20.6px;font-weight:bold;color:#1f5c3f;line-height:1;margin-top:1px;">Cobrado</span></div><div style="position:absolute;left:2202.50px;top:1000.17px;font-size:18.4px;line-height:1;color:#6b7280;font-weight:normal;font-style:italic;white-space:nowrap;">5 videos editados</div><div style="position:absolute;left:90.70px;top:1028.21px;width:74.80px;height:38.09px;background:#ebe7fb;"></div><div style="position:absolute;left:165.50px;top:1028.21px;width:847.50px;height:38.09px;background:#fefbea;"></div><div style="position:absolute;left:1013.00px;top:1028.21px;width:329.50px;height:38.09px;background:#f3f4f6;"></div><div style="position:absolute;left:1342.50px;top:1028.21px;width:530.50px;height:38.09px;background:#fefbea;"></div><div style="position:absolute;left:1873.00px;top:1028.21px;width:323.00px;height:38.09px;background:#f9e2e2;"></div><div style="position:absolute;left:2196.00px;top:1028.21px;width:347.50px;height:38.09px;background:#f3f4f6;"></div><div style="position:absolute;left:-571.90px;width:1400px;text-align:center;top:1037.19px;font-size:20.6px;line-height:1;color:#46208f;font-weight:bold;font-style:normal;white-space:nowrap;">12</div><div style="position:absolute;left:170.70px;top:1037.71px;font-size:20.35px;line-height:1;color:#1a1033;font-weight:bold;font-style:normal;white-space:nowrap;">Traducción documentos x5</div><div style="position:absolute;left:649.20px;top:1038.22px;font-size:18.5px;line-height:1;color:#1e1538;font-weight:normal;font-style:normal;white-space:nowrap;">Firma legal local</div><div style="position:absolute;left:477.75px;width:1400px;text-align:center;top:1038.22px;font-size:18.5px;line-height:1;color:#1e1538;font-weight:normal;font-style:normal;white-space:nowrap;">Traducción</div><div style="position:absolute;left:706.50px;width:1400px;text-align:center;top:1038.22px;font-size:18.5px;line-height:1;color:#6b7280;font-weight:normal;font-style:normal;white-space:nowrap;">22/04/2026</div><div style="position:absolute;left:907.50px;width:1400px;text-align:center;top:1036.31px;font-size:22.4px;line-height:1;color:#46208f;font-weight:bold;font-style:normal;white-space:nowrap;">$75,00</div><div style="position:absolute;left:1108.75px;width:1400px;text-align:center;top:1037.00px;font-size:21px;line-height:1;color:#1f3a88;font-weight:normal;font-style:normal;white-space:nowrap;">4</div><div style="position:absolute;left:1873.00px;top:1028.21px;width:323.00px;height:38.09px;display:flex;align-items:center;justify-content:center;"><span style="display:inline-block;width:15px;height:21.5px;position:relative;margin-right:14.2px;margin-left:2px;margin-top:-1px;"><svg style="position:absolute;left:0px;top:0px;" width="15" height="21" viewBox="0 0 15 21" fill="none"><rect x="0.5" y="0" width="14" height="2.6" rx="1" fill="#5a3a22"/><rect x="0.5" y="18.4" width="14" height="2.6" rx="1" fill="#5a3a22"/><path d="M2.5 2.6H12.5C12.5 7 8.8 8.8 8.2 10.5C8.8 12.2 12.5 14 12.5 18.4H2.5C2.5 14 6.2 12.2 6.8 10.5C6.2 8.8 2.5 7 2.5 2.6Z" fill="#e6e9ee" stroke="#9aa3ad" stroke-width="0.8"/><path d="M4.2 17.6C5 15 7.5 14.2 7.5 12.2C7.5 14.2 10 15 10.8 17.6Z" fill="#c98a3c"/><path d="M4.6 5.2H10.4C9.6 7 8 7.8 7.5 9C7 7.8 5.4 7 4.6 5.2Z" fill="#d9a155"/></svg></span><span style="font-size:20.6px;font-weight:bold;color:#9b1f1f;line-height:1;margin-top:1px;">Pendiente</span></div><div style="position:absolute;left:2202.50px;top:1038.27px;font-size:18.4px;line-height:1;color:#6b7280;font-weight:normal;font-style:italic;white-space:nowrap;">Español-Inglés</div><div style="position:absolute;left:90.70px;top:1066.30px;width:2452.80px;height:319.70px;background:#fefbe9;"></div><div style="position:absolute;left:89.90px;top:608.00px;width:2453.60px;height:2.00px;background:#d9dce3;"></div><div style="position:absolute;left:89.90px;top:646.00px;width:2453.60px;height:2.00px;background:#d9dce3;"></div><div style="position:absolute;left:89.90px;top:684.00px;width:2453.60px;height:2.00px;background:#d9dce3;"></div><div style="position:absolute;left:89.90px;top:722.00px;width:2453.60px;height:2.00px;background:#d9dce3;"></div><div style="position:absolute;left:89.90px;top:760.00px;width:2453.60px;height:2.00px;background:#d9dce3;"></div><div style="position:absolute;left:89.90px;top:799.00px;width:2453.60px;height:2.00px;background:#d9dce3;"></div><div style="position:absolute;left:89.90px;top:837.00px;width:2453.60px;height:2.00px;background:#d9dce3;"></div><div style="position:absolute;left:89.90px;top:875.00px;width:2453.60px;height:2.00px;background:#d9dce3;"></div><div style="position:absolute;left:89.90px;top:913.00px;width:2453.60px;height:2.00px;background:#d9dce3;"></div><div style="position:absolute;left:89.90px;top:951.00px;width:2453.60px;height:2.00px;background:#d9dce3;"></div><div style="position:absolute;left:89.90px;top:989.00px;width:2453.60px;height:2.00px;background:#d9dce3;"></div><div style="position:absolute;left:89.90px;top:1027.00px;width:2453.60px;height:2.00px;background:#d9dce3;"></div><div style="position:absolute;left:89.90px;top:1065.00px;width:2453.60px;height:2.00px;background:#d9dce3;"></div><div style="position:absolute;left:89.90px;top:1102.00px;width:2453.60px;height:2.00px;background:#d9dce3;"></div><div style="position:absolute;left:89.90px;top:1139.00px;width:2453.60px;height:2.00px;background:#d9dce3;"></div><div style="position:absolute;left:89.90px;top:1175.00px;width:2453.60px;height:2.00px;background:#d9dce3;"></div><div style="position:absolute;left:89.90px;top:1212.00px;width:2453.60px;height:2.00px;background:#d9dce3;"></div><div style="position:absolute;left:89.90px;top:1248.00px;width:2453.60px;height:2.00px;background:#d9dce3;"></div><div style="position:absolute;left:89.90px;top:1285.00px;width:2453.60px;height:2.00px;background:#d9dce3;"></div><div style="position:absolute;left:89.90px;top:1321.00px;width:2453.60px;height:2.00px;background:#d9dce3;"></div><div style="position:absolute;left:89.90px;top:1358.00px;width:2453.60px;height:2.00px;background:#d9dce3;"></div><div style="position:absolute;left:90.00px;top:608.20px;width:2.00px;height:777.80px;background:#d9dce3;"></div><div style="position:absolute;left:165.00px;top:608.20px;width:2.00px;height:777.80px;background:#d9dce3;"></div><div style="position:absolute;left:643.00px;top:608.20px;width:2.00px;height:777.80px;background:#d9dce3;"></div><div style="position:absolute;left:1012.00px;top:608.20px;width:2.00px;height:777.80px;background:#d9dce3;"></div><div style="position:absolute;left:1341.00px;top:608.20px;width:2.00px;height:777.80px;background:#d9dce3;"></div><div style="position:absolute;left:1469.00px;top:608.20px;width:2.00px;height:777.80px;background:#d9dce3;"></div><div style="position:absolute;left:1743.00px;top:608.20px;width:2.00px;height:777.80px;background:#d9dce3;"></div><div style="position:absolute;left:1872.00px;top:608.20px;width:2.00px;height:777.80px;background:#d9dce3;"></div><div style="position:absolute;left:2195.00px;top:608.20px;width:2.00px;height:777.80px;background:#d9dce3;"></div><div style="position:absolute;left:2543.00px;top:608.20px;width:2.00px;height:777.80px;background:#d9dce3;"></div><div style="position:absolute;left:2543.50px;top:248.70px;width:1.50px;height:1137.30px;background:#c4c7c5;"></div><div style="position:absolute;left:2545.00px;top:248.70px;width:15.00px;height:1137.30px;background:#ffffff;"></div><div style="position:absolute;left:2546.2px;top:250px;width:15px;height:39.4px;background:#d9d9d9;border-radius:7.5px;"></div><div style="position:absolute;left:2545.00px;top:211.80px;width:15.00px;height:35.50px;background:#f8f8f8;"></div><div style="position:absolute;left:2543.40px;top:211.80px;width:1.80px;height:36.90px;background:#c9cbcb;"></div><div style="position:absolute;left:2545.00px;top:247.30px;width:15.00px;height:1.40px;background:#cfd1d1;"></div><div style="position:absolute;left:2545.00px;top:1337.50px;width:15.00px;height:1.30px;background:#c4c7c5;"></div><div style="position:absolute;left:2545.00px;top:1338.80px;width:15.00px;height:47.20px;background:#f8f9fa;"></div><div style="position:absolute;left:2545.00px;top:1361.80px;width:15.00px;height:1.20px;background:#d5d5d5;"></div><svg style="position:absolute;left:2549px;top:1345.5px;" width="8" height="5" viewBox="0 0 8 5" fill="none"><path d="M0 5H8L4 0Z" fill="#999"/></svg><svg style="position:absolute;left:2549px;top:1371.5px;" width="8" height="5" viewBox="0 0 8 5" fill="none"><path d="M0 0H8L4 5Z" fill="#999"/></svg><div style="position:absolute;left:0.00px;top:1385.30px;width:2560.00px;height:1.40px;background:#c4c7c5;"></div><div style="position:absolute;left:0.00px;top:1386.70px;width:69.00px;height:17.80px;background:#f8f9fa;"></div><div style="position:absolute;left:69.00px;top:1386.70px;width:1.60px;height:17.80px;background:#c4c7c5;"></div><div style="position:absolute;left:70.60px;top:1386.70px;width:2489.40px;height:17.80px;background:#ffffff;"></div><div style="position:absolute;left:71.5px;top:1388.4px;width:1379px;height:14.2px;background:#dadce0;border-radius:8px;"></div><div style="position:absolute;left:2496.00px;top:1386.70px;width:47.50px;height:17.80px;background:#f8f9fa;"></div><div style="position:absolute;left:2496.00px;top:1386.70px;width:1.00px;height:17.80px;background:#d5d5d5;"></div><div style="position:absolute;left:2520.50px;top:1386.70px;width:1.00px;height:17.80px;background:#d5d5d5;"></div><div style="position:absolute;left:2543.50px;top:1386.70px;width:1.70px;height:17.80px;background:#c4c7c5;"></div><div style="position:absolute;left:2545.20px;top:1386.70px;width:14.80px;height:17.80px;background:#f8f9fa;"></div><svg style="position:absolute;left:2504.5px;top:1391.8px;" width="5" height="8" viewBox="0 0 5 8" fill="none"><path d="M5 0V8L0 4Z" fill="#999"/></svg><svg style="position:absolute;left:2529px;top:1391.8px;" width="5" height="8" viewBox="0 0 5 8" fill="none"><path d="M0 0V8L5 4Z" fill="#999"/></svg><div style="position:absolute;left:0.00px;top:1404.50px;width:2560.00px;height:2.00px;background:#c4c7c5;"></div><div style="position:absolute;left:0.00px;top:1406.50px;width:2560.00px;height:55.50px;background:#f9fbfd;"></div><div style="position:absolute;left:85.00px;top:1434.80px;width:17.00px;height:2.40px;background:#444746;"></div><div style="position:absolute;left:92.30px;top:1427.50px;width:2.40px;height:17.00px;background:#444746;"></div><div style="position:absolute;left:144.00px;top:1428.20px;width:22.00px;height:2.40px;background:#444746;"></div><div style="position:absolute;left:144.00px;top:1435.00px;width:22.00px;height:2.40px;background:#444746;"></div><div style="position:absolute;left:144.00px;top:1441.80px;width:22.00px;height:2.40px;background:#444746;"></div><div style="position:absolute;left:442.50px;top:1406.50px;width:203.90px;height:55.50px;background:#e1e6ef;"></div><div style="position:absolute;left:826.00px;top:1406.50px;width:176.30px;height:55.50px;background:#ececed;"></div><svg style="position:absolute;left:224px;top:1424.5px;" width="19" height="21" viewBox="0 0 19 21" fill="none"><rect x="1" y="2" width="17" height="18.5" rx="2" fill="#b8863b"/><rect x="3" y="4" width="13" height="15" fill="#e8e8e8"/><rect x="6" y="0.5" width="7" height="4" rx="1" fill="#9a9a9a"/></svg><div style="position:absolute;left:250.50px;top:1425.11px;font-size:22.2px;line-height:1;color:#444746;font-weight:normal;font-style:normal;white-space:nowrap;letter-spacing:1.1px;">Instrucciones</div><svg style="position:absolute;left:411.0px;top:1432.25px;" width="12" height="6.5" viewBox="0 0 12 6.5" fill="none"><path d="M0 0H12L6.0 6.5Z" fill="#444746"/></svg><svg style="position:absolute;left:460.5px;top:1424.5px;" width="19" height="21" viewBox="0 0 19 21" fill="none"><rect x="1" y="2" width="17" height="18.5" rx="2" fill="#b8863b"/><rect x="3" y="4" width="13" height="15" fill="#e8e8e8"/><rect x="6" y="0.5" width="7" height="4" rx="1" fill="#9a9a9a"/></svg><div style="position:absolute;left:487.50px;top:1425.11px;font-size:22.2px;line-height:1;color:#0b57d0;font-weight:bold;font-style:normal;white-space:nowrap;letter-spacing:0.3px;">Proyectos</div><svg style="position:absolute;left:616.0px;top:1432.25px;" width="12" height="6.5" viewBox="0 0 12 6.5" fill="none"><path d="M0 0H12L6.0 6.5Z" fill="#0b57d0"/></svg><svg style="position:absolute;left:665px;top:1425.5px;" width="21" height="19" viewBox="0 0 21 19" fill="none"><circle cx="14" cy="5.5" r="4" fill="#4f6fa8"/><path d="M7 18C7 12 10 10 14 10C18 10 21 12 21 18Z" fill="#4f6fa8"/><circle cx="7" cy="6" r="4" fill="#6b8cc9"/><path d="M0 18.5C0 12.5 3 10.5 7 10.5C11 10.5 14 12.5 14 18.5Z" fill="#6b8cc9"/></svg><div style="position:absolute;left:691.50px;top:1425.11px;font-size:22.2px;line-height:1;color:#444746;font-weight:normal;font-style:normal;white-space:nowrap;letter-spacing:0.85px;">Clientes</div><svg style="position:absolute;left:795.5px;top:1432.25px;" width="12" height="6.5" viewBox="0 0 12 6.5" fill="none"><path d="M0 0H12L6.0 6.5Z" fill="#444746"/></svg><svg style="position:absolute;left:846px;top:1425px;" width="19" height="20" viewBox="0 0 19 20" fill="none"><rect x="0.5" y="0.5" width="18" height="19" rx="1.5" fill="#f2f2f2" stroke="#c9c9c9"/><rect x="3" y="9" width="3" height="9" fill="#3a8c3f"/><rect x="8" y="4" width="3" height="14" fill="#d23b3b"/><rect x="13" y="11" width="3" height="7" fill="#3a64c8"/></svg><div style="position:absolute;left:872.00px;top:1425.11px;font-size:22.2px;line-height:1;color:#444746;font-weight:normal;font-style:normal;white-space:nowrap;letter-spacing:0.85px;">Análisis</div><svg style="position:absolute;left:971.0px;top:1432.25px;" width="12" height="6.5" viewBox="0 0 12 6.5" fill="none"><path d="M0 0H12L6.0 6.5Z" fill="#444746"/></svg><svg style="position:absolute;left:1024px;top:1423px;" width="19" height="22" viewBox="0 0 19 22" fill="none"><path d="M6 1H13L11 5C16 7 18.5 11.5 18.5 15.5C18.5 19.5 15 21.5 9.5 21.5C4 21.5 0.5 19.5 0.5 15.5C0.5 11.5 3 7 8 5Z" fill="#d9a441"/><path d="M6.5 4.8H12.5" stroke="#8a5a1a" stroke-width="1.5"/><text x="9.5" y="17.5" font-size="10" text-anchor="middle" fill="#6b4410" font-family="Liberation Sans" font-weight="bold">$</text></svg><div style="position:absolute;left:1049.50px;top:1425.11px;font-size:22.2px;line-height:1;color:#444746;font-weight:normal;font-style:normal;white-space:nowrap;letter-spacing:0.73px;">Tarifas y Flujo</div><svg style="position:absolute;left:1214.0px;top:1432.25px;" width="12" height="6.5" viewBox="0 0 12 6.5" fill="none"><path d="M0 0H12L6.0 6.5Z" fill="#444746"/></svg><svg style="position:absolute;left:2513px;top:1429.5px;" width="11" height="16" viewBox="0 0 11 16" fill="none"><path d="M9.5 1.5L2.5 8L9.5 14.5" fill="none" stroke="#444746" stroke-width="2.6"/></svg></body></html>
